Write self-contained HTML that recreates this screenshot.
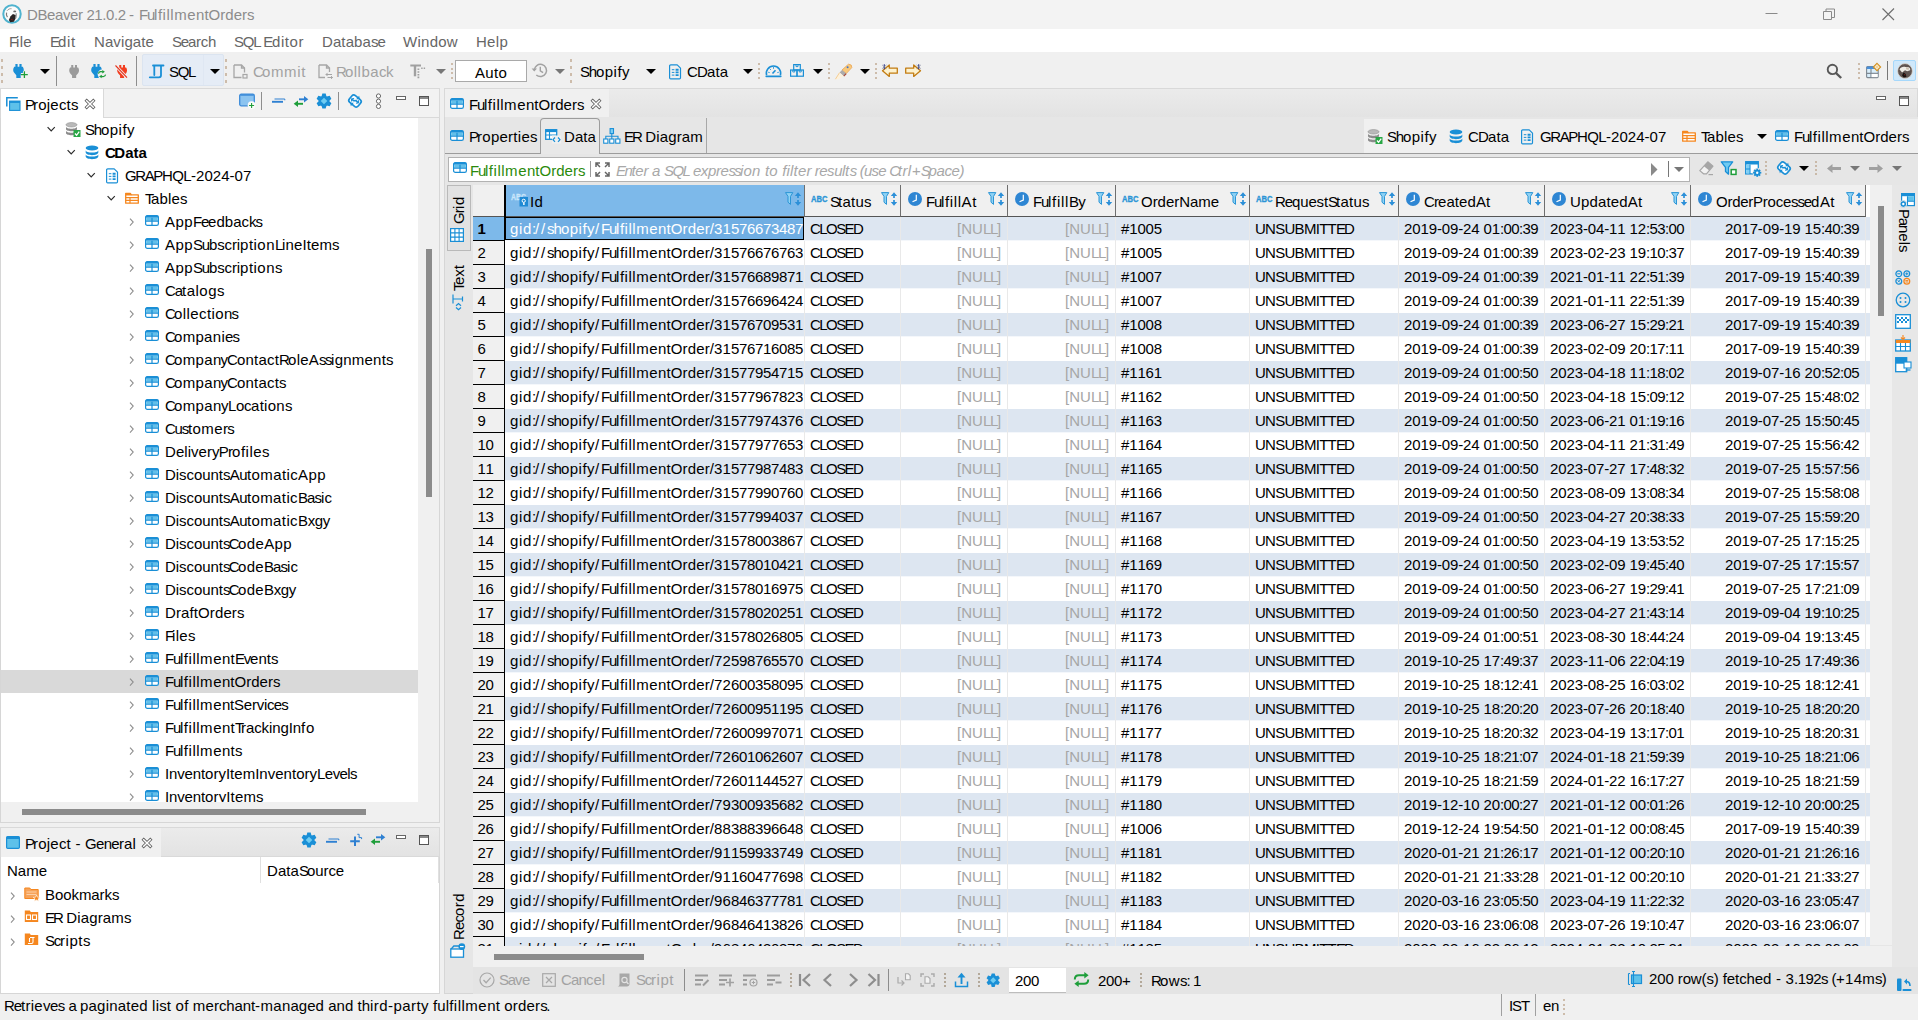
<!DOCTYPE html>
<html><head><meta charset="utf-8"><title>DBeaver 21.0.2 - FulfillmentOrders</title>
<style>
*{box-sizing:border-box;margin:0;padding:0}
html,body{width:1918px;height:1020px;overflow:hidden;background:#f0f0f0;font-family:"Liberation Sans", sans-serif;font-size:15px;color:#000}
.abs,.abs>*{position:absolute}
.t{position:absolute;white-space:pre;line-height:20px;height:20px;font-kerning:none;font-variant-ligatures:none}
.i{position:absolute;display:block;overflow:visible}
#title{left:0;top:0;width:1918px;height:29px;background:#f3f3f3}
#menu{left:0;top:29px;width:1918px;height:23px;background:#fff}
#tb{left:0;top:52px;width:1918px;height:36px;background:#f0f0f0}
.hd{position:absolute;width:2px;background:repeating-linear-gradient(#cdbcab 0 3px,transparent 3px 7px)}
.hd.s{background:repeating-linear-gradient(#cdbcab 0 2px,transparent 2px 4.67px)}
.vs{position:absolute;width:1px;background:#8e8e8e}
.dd{position:absolute;margin-left:1px;width:0;height:0;border-left:5px solid transparent;border-right:5px solid transparent;border-top:5px solid #000}
.dd.g{border-top-color:#777}
.gr{color:#a2a2a2}
.tabbar{position:absolute;background:#f2f2f2;border:1px solid #d9d9d9}
.tab{position:absolute;background:#fff}
#tree{left:1px;top:118px;width:417px;height:684px;background:#fff;overflow:hidden}
.tr{position:absolute;left:0;width:417px;height:23px}
.tr.sel{background:#d9d9d9}
#grid{left:473px;top:185px;width:1397px;height:761px;background:#fff;overflow:hidden}
.row{position:absolute;left:32px;width:1365px;height:24px}
.row.o{background:linear-gradient(#dde6f1 0 23px,#f4f7fb 23px 24px)}
.c{position:absolute;top:0;height:24px;border-right:1px solid #e9e9e9;overflow:hidden}
.nul{color:#a6a6a6}
.rn{position:absolute;left:0;width:31px;height:24px;background:#f0f0f0;border-bottom:1px solid #000}
.hc{position:absolute;top:0;height:32px;background:#f0f0f0;border-right:1px solid #6e6e6e;border-bottom:1px solid #555}
</style></head><body>

<div id="title" class="abs">
<svg class="i" style="left:2px;top:4px" width="20" height="20" viewBox="0 0 22 22"><circle cx="11" cy="11" r="9.6" fill="#fbfbfb" stroke="#4fb3cf" stroke-width="2.2"/><path d="M5.500 7.500c1.500-2 3.500-2.500 5-2.300" stroke="#8f8f8f" stroke-width="1" fill="none"/><path d="M5 9.500c-.5 2 .3 4 1 5" stroke="#7a7a7a" stroke-width="1.300" fill="none"/><ellipse cx="14" cy="8.200" rx="1.600" ry="1" fill="#6a6a6a"/><path d="M9.500 13.500l2.500-2.500l3.500 1.500l-.5 3.500l-2 3.500l-4 .5l-1.500-2.500z" fill="#2a2424"/><path d="M15 10l1.500 .5l-.5 5l-1.500 1z" fill="#9a9a9a"/><path d="M10 17l1.800 .3" stroke="#8a1c1c" stroke-width="1"/></svg>
<span class="t " style="left:27px;top:5px;color:#8c8c8c"><span style="letter-spacing:-0.39px">DBeaver 21.0</span><span style="letter-spacing:-0.56px">.2 </span><span style="letter-spacing:0.42px">- </span><span style="letter-spacing:-1.25px">Fu</span><span style="letter-spacing:0.52px">lfillme</span><span style="letter-spacing:0.02px">ntOrder</span><span style="letter-spacing:-1.50px">s</span></span>
<svg class="i" style="left:1765px;top:8px" width="14" height="14" viewBox="0 0 14 14"><path d="M0.5 5.5h12" stroke="#8a8a8a" fill="none"/></svg>
<svg class="i" style="left:1823px;top:8px" width="14" height="14" viewBox="0 0 14 14"><path d="M0.5 3.5h8v8h-8z M3 3.5v-2.5h8.5v8.5h-3" stroke="#8a8a8a" fill="none"/></svg>
<svg class="i" style="left:1882px;top:8px" width="14" height="14" viewBox="0 0 14 14"><path d="M.5 .5l11.500 11.500M12 .5l-11.500 11.500" stroke="#6e6e6e" fill="none" stroke-width="1.100"/></svg>
</div>
<div id="menu" class="abs">
<span class="t " style="left:9px;top:3px;color:#666"><span style="letter-spacing:-2.16px">F</span><span style="letter-spacing:0.33px">ile</span></span>
<span class="t " style="left:50px;top:3px;color:#666"><span style="letter-spacing:-2.01px">E</span><span style="letter-spacing:0.72px">dit</span></span>
<span class="t " style="left:94px;top:3px;color:#666"><span style="letter-spacing:0.10px">Navigate</span></span>
<span class="t " style="left:172px;top:3px;color:#666"><span style="letter-spacing:-1.17px">Se</span><span style="letter-spacing:-0.30px">arch</span></span>
<span class="t " style="left:234px;top:3px;color:#666"><span style="letter-spacing:-1.24px">SQL E</span><span style="letter-spacing:0.56px">ditor</span></span>
<span class="t " style="left:322px;top:3px;color:#666"><span style="letter-spacing:0.10px">Databa</span><span style="letter-spacing:-0.92px">se</span></span>
<span class="t " style="left:403px;top:3px;color:#666"><span style="letter-spacing:0.27px">Window</span></span>
<span class="t " style="left:476px;top:3px;color:#666"><span style="letter-spacing:0.29px">Help</span></span>
</div>
<div id="tb" class="abs">
<div class="hd" style="left:1px;top:7px;height:24px"></div>
<svg class="i" style="left:13px;top:12px" width="17" height="16" viewBox="0 0 17 16"><rect x="2.400" y="0" width="2.200" height="3.500" fill="#1a8fd6"/><rect x="6.400" y="0" width="2.200" height="3.500" fill="#1a8fd6"/><path d="M1.200 2.800h8.600c1.200 1.800 1.400 4 .2 5.800l-2.300 2.600v2.800h-4.400v-2.800l-2.300-2.600c-1.200-1.800-1-4 .2-5.800z" fill="#1a8fd6"/><path d="M11.400 7v7M7.900 10.500h7" stroke="#f0f0f0" stroke-width="2.800"/><path d="M11.400 7.200v6.800M8 10.600h6.800" stroke="#1e9e3a" stroke-width="1.300"/></svg>
<div class="dd" style="left:39px;top:17px"></div>
<div class="vs" style="left:56px;top:4px;height:30px"></div>
<svg class="i" style="left:69px;top:13px" width="11" height="14" viewBox="0 0 11 14"><g transform="scale(.93)"><rect x="2.400" y="0" width="2.200" height="3.500" fill="#9b9b9b"/><rect x="6.400" y="0" width="2.200" height="3.500" fill="#9b9b9b"/><path d="M1.200 2.800h8.600c1.200 1.800 1.400 4 .2 5.800l-2.300 2.600v2.800h-4.400v-2.800l-2.300-2.600c-1.200-1.800-1-4 .2-5.800z" fill="#9b9b9b"/></g></svg>
<svg class="i" style="left:91px;top:12px" width="17" height="16" viewBox="0 0 17 16"><rect x="2.400" y="0" width="2.200" height="3.500" fill="#1a8fd6"/><rect x="6.400" y="0" width="2.200" height="3.500" fill="#1a8fd6"/><path d="M1.200 2.800h8.600c1.200 1.800 1.400 4 .2 5.800l-2.300 2.600v2.800h-4.400v-2.800l-2.300-2.600c-1.200-1.800-1-4 .2-5.800z" fill="#1a8fd6"/><circle cx="11" cy="10" r="4.400" fill="#f0f0f0"/><path d="M7.400 9.600c.6-2 3.200-2.600 4.800-1.500M14.600 10.600c-.6 2-3.200 2.600-4.800 1.500" stroke="#1e9e3a" stroke-width="1.200" fill="none"/><path d="M11.300 6l2.600 1.800l-2.600 1.700zM10.700 14.200l-2.600-1.800l2.600-1.700z" fill="#1e9e3a"/></svg>
<svg class="i" style="left:115px;top:12px" width="14" height="16" viewBox="0 0 14 16"><g transform="translate(2,1) scale(.93)"><rect x="2.400" y="0" width="2.200" height="3.500" fill="#f23d1f"/><rect x="6.400" y="0" width="2.200" height="3.500" fill="#f23d1f"/><path d="M1.200 2.800h8.600c1.200 1.800 1.400 4 .2 5.800l-2.300 2.600v2.800h-4.400v-2.800l-2.300-2.600c-1.200-1.800-1-4 .2-5.800z" fill="#f23d1f"/></g><path d="M.8 1.800l11 11.700" stroke="#f0f0f0" stroke-width="2.800"/><path d="M.5 1.500l11.500 12.200" stroke="#e6311a" stroke-width="1.100"/></svg>
<div class="vs" style="left:136px;top:4px;height:30px"></div>
<div style="left:142px;top:2px;width:82px;height:32px;background:#e5ecf6;border:1px solid #dbe4f0;border-radius:2px"></div>
<div style="left:203px;top:3px;width:1px;height:30px;background:#dfe7f3"></div>
<svg class="i" style="left:149px;top:12px" width="16" height="15" viewBox="0 0 16 15"><path d="M4 1.500h10.500M5.300 1.500v9.500M12 1.500v9.800c0 1.400-.7 2-2 2h-9.200" stroke="#1a8fd6" stroke-width="1.800" fill="none" stroke-linecap="round"/></svg>
<span class="t " style="left:169px;top:10px;"><span style="letter-spacing:-1.34px">SQL</span></span>
<div class="dd" style="left:209px;top:17px"></div>
<div class="hd" style="left:225px;top:7px;height:24px"></div>
<svg class="i" style="left:233px;top:12px" width="15" height="15" viewBox="0 0 15 15"><path d="M1 1h7.5l3 3v4.5M1 1v12.5h7.5" stroke="#a6a6a6" stroke-width="1.3" fill="none"/><path d="M8.5 1v3h3" stroke="#a6a6a6" stroke-width="1.3" fill="none"/><rect x="10" y="10.5" width="4" height="3.5" stroke="#a6a6a6" fill="none" stroke-width="1.2"/></svg>
<span class="t gr" style="left:253px;top:10px;"><span style="letter-spacing:-1.83px">C</span><span style="letter-spacing:0.63px">ommit</span></span>
<svg class="i" style="left:318px;top:12px" width="15" height="15" viewBox="0 0 15 15"><path d="M1 1h7.5l3 3v4M1 1v12.5h6" stroke="#a6a6a6" stroke-width="1.3" fill="none"/><path d="M8.5 1v3h3" stroke="#a6a6a6" stroke-width="1.3" fill="none"/><path d="M8 10.5h6M8 10.5l1.6-1.6M8 10.5l1.6 1.6M14.5 13.5h-5M14.5 13.5l-1.4-1.4M14.5 13.5l-1.4 1.4" stroke="#a6a6a6" stroke-width="1" fill="none"/></svg>
<span class="t gr" style="left:336px;top:10px;"><span style="letter-spacing:-1.83px">R</span><span style="letter-spacing:0.46px">ollba</span><span style="letter-spacing:-0.50px">ck</span></span>
<svg class="i" style="left:410px;top:12px" width="16" height="15" viewBox="0 0 16 15"><path d="M.3 1.500h10.700" stroke="#a0a0a0" stroke-width="2"/><path d="M5 1.500v10.800" stroke="#a0a0a0" stroke-width="2.400"/><path d="M11.200 4.200h4.300" stroke="#a0a0a0" stroke-width="1.600" stroke-dasharray="1.400 1.100" fill="none"/><path d="M8.400 4.500v9.800" stroke="#a0a0a0" stroke-width="1.800" stroke-dasharray="1.600 1.100" fill="none"/></svg>
<div class="dd g" style="left:435px;top:17px"></div>
<div class="hd s" style="left:451px;top:11px;height:16px"></div>
<div style="left:455px;top:8px;width:72px;height:22px;background:#fff;border:1px solid #a9a9a9"></div>
<span class="t " style="left:475px;top:11px;"><span style="letter-spacing:0.29px">Auto</span></span>
<svg class="i" style="left:531px;top:11px" width="17" height="15" viewBox="0 0 17 15"><path d="M3.300 7.300a6.100 6.100 0 1 1 2 4.700" stroke="#a2a2a2" stroke-width="1.500" fill="none"/><path d="M.6 5.600l2.700 3l2.700-3z" fill="#a2a2a2"/><path d="M9.300 3.800v4l2.800 1.900" stroke="#a2a2a2" stroke-width="1.400" fill="none"/></svg>
<div class="dd g" style="left:554px;top:17px"></div>
<div class="hd" style="left:570px;top:7px;height:24px"></div>
<span class="t " style="left:580px;top:10px;"><span style="letter-spacing:-1.17px">Sh</span><span style="letter-spacing:0.46px">opify</span></span>
<div class="dd" style="left:645px;top:17px"></div>
<svg class="i" style="left:669px;top:12px" width="13" height="16" viewBox="0 0 13 16"><path d="M1.700 .8h6.500l3.300 3.300v9.600c0 .7-.4 1.100-1.100 1.100h-8.700c-.7 0-1.100-.4-1.100-1.100v-11.800c0-.7.4-1.100 1.100-1.100z" fill="none" stroke="#1a8fd6" stroke-width="1.200" stroke-linejoin="round"/><path d="M2.800 5.700h2.600M2.800 8.400h2.600M2.800 11.100h2.600" stroke="#1a8fd6" stroke-width="1"/><path d="M6.600 5.700h3M6.600 8.400h3M6.600 11.100h3" stroke="#1a8fd6" stroke-width="1.900"/></svg>
<span class="t " style="left:687px;top:10px;"><span style="letter-spacing:-0.83px">CD</span><span style="letter-spacing:0.05px">ata</span></span>
<div class="dd" style="left:742px;top:17px"></div>
<div class="hd s" style="left:758px;top:11px;height:16px"></div>
<svg class="i" style="left:765px;top:12px" width="17" height="14" viewBox="0 0 17 14"><path d="M1.600 11.300a7.200 7.200 0 1 1 13.800 0" fill="none" stroke="#1a8fd6" stroke-width="1.500"/><path d="M1.300 12.300h14.400" stroke="#1a8fd6" stroke-width="1.800" stroke-linecap="round"/><path d="M7.500 9.500l3-3.200" stroke="#1a8fd6" stroke-width="1.600"/><path d="M3.300 8.300l1.300.3M4.800 4.800l1 1M8.500 3.200v1.500M13.700 8.300l-1.300.3" stroke="#1a8fd6" stroke-width="1"/></svg>
<svg class="i" style="left:790px;top:12px" width="14" height="13" viewBox="0 0 14 13"><rect x="3.700" y=".6" width="6.600" height="5.400" fill="none" stroke="#1a8fd6" stroke-width="1.200"/><rect x=".6" y="6" width="6.400" height="6.200" fill="none" stroke="#1a8fd6" stroke-width="1.200"/><rect x="7" y="6" width="6.400" height="6.200" fill="none" stroke="#1a8fd6" stroke-width="1.200"/><path d="M6 .6v2h2v-2M2.800 6v2h2v-2M9.200 6v2h2v-2" fill="none" stroke="#1a8fd6" stroke-width=".9"/></svg>
<div class="dd" style="left:812px;top:17px"></div>
<div class="hd s" style="left:828px;top:11px;height:16px"></div>
<svg class="i" style="left:835px;top:11px" width="18" height="17" viewBox="0 0 18 17"><path d="M13.500 1.200l2.700 .8l.6 2.600l-5.600 6l-4.200-3.600z" fill="#f9c97c" stroke="#e9a24e" stroke-width=".8"/><path d="M7 7l4.200 3.600l-2.400 2.600l-4.200-3.600z" fill="#acabab"/><path d="M8.800 13.200l2.400-2.600" stroke="#a94a3c" stroke-width="1.200"/><path d="M4.600 9.600l4.200 3.600l-5.800 3.300l-2.600-.3z" fill="#fdf1dc"/><path d="M4.600 9.600l-4.200 6.600" stroke="#f5c98b" stroke-width=".9"/><circle cx="12.600" cy="4.200" r="1" fill="#3f74c9"/></svg>
<div class="dd" style="left:859px;top:17px"></div>
<div class="hd s" style="left:875px;top:11px;height:16px"></div>
<svg class="i" style="left:881px;top:10px" width="18" height="16" viewBox="0 0 18 16"><path d="M8.300 3v3.200h8v5h-8v3.200l-6.800-5.700z" fill="#fdf2cf" stroke="#c27c12" stroke-width="1.300" stroke-linejoin="round"/><path d="M3.300 2.300v5" stroke="#2d3a8c" stroke-width="1.100"/><path d="M1.200 3l4.200 3.600M5.400 3l-4.200 3.600" stroke="#7a7f9a" stroke-width=".7"/></svg>
<svg class="i" style="left:904px;top:10px" width="18" height="16" viewBox="0 0 18 16"><path d="M9.700 3v3.200h-8v5h8v3.200l6.800-5.700z" fill="#fdf2cf" stroke="#c27c12" stroke-width="1.300" stroke-linejoin="round"/><path d="M14.700 2.300v5" stroke="#2d3a8c" stroke-width="1.100"/><path d="M12.600 3l4.200 3.600M16.800 3l-4.200 3.600" stroke="#7a7f9a" stroke-width=".7"/></svg>
<svg class="i" style="left:1826px;top:11px" width="17" height="17" viewBox="0 0 17 17"><circle cx="6.400" cy="6.400" r="4.700" fill="none" stroke="#585858" stroke-width="1.900"/><path d="M9.800 9.800l5.400 5.200" stroke="#585858" stroke-width="2.300"/></svg>
<div class="hd s" style="left:1858px;top:11px;height:16px"></div>
<svg class="i" style="left:1866px;top:11px" width="17" height="16" viewBox="0 0 17 16"><rect x=".6" y="3.600" width="11.600" height="11" rx="1" fill="#d9eefb" stroke="#7d8791" stroke-width="1.100"/><path d="M.6 4.600c0-.6.4-1 1-1h9.600c.6 0 1 .4 1 1v1.400h-11.600z" fill="#4a90d9"/><path d="M5 6v8.600M.6 10.400h11.600" stroke="#7d8791" stroke-width="1.100"/><rect x="5.600" y="10.900" width="6" height="3.200" fill="#fff"/><path d="M11 .4l3.600 3.600l-3.600 3.600l-3.600-3.600z" fill="#fffdf5" stroke="#d18e1c" stroke-width="1.100"/><path d="M11 2.200v3.600M9.200 4h3.600" stroke="#f3c77a" stroke-width="1"/></svg>
<div class="vs" style="left:1887px;top:9px;height:19px;background:#777"></div>
<div style="left:1893px;top:8px;width:23px;height:21px;background:#cfe8fb;border:1px solid #a6d8fb;border-radius:2px"></div>
<svg class="i" style="left:1897px;top:11px" width="16" height="16" viewBox="0 0 22 22"><circle cx="11" cy="11" r="10.2" fill="#5f5451" stroke="#e8e2d8" stroke-width="1"/><path d="M3.500 9c1-3 5-4.500 8-3.500l4.500 .5c2 1 2.500 2.500 2 4l-4 1.500l-3-1.500l-4 3z" fill="#efece6"/><path d="M12.500 6l4 1l-.5 2.500l-3.500-1z" fill="#cdbfae"/><path d="M9 13l3 2l1 4l-4 1l-2-3z" fill="#17100e"/><path d="M10 16l1.500 .5" stroke="#b5322a" stroke-width="1"/></svg>
</div>
<div class="abs">
<div class="tabbar" style="left:0;top:88px;width:440px;height:30px"></div>
<div class="tab" style="left:1px;top:89px;width:103px;height:29px;border-right:1px solid #d9d9d9"></div>
<svg class="i" style="left:6px;top:97px" width="15" height="14" viewBox="0 0 15 14"><path d="M.8 9.500v-8.700h11" fill="none" stroke="#1a8fd6" stroke-width="1.500"/><rect x="3.600" y="4.100" width="10.400" height="9.300" fill="#5ec1ea" stroke="#1a8fd6" stroke-width="1.100"/><rect x="3.600" y="4.100" width="10.400" height="1.800" fill="#1a8fd6"/></svg>
<span class="t " style="left:25px;top:95px;"><span style="letter-spacing:-2.01px">P</span><span style="letter-spacing:0.22px">roject</span><span style="letter-spacing:-1.50px">s</span></span>
<svg class="i" style="left:85px;top:99px" width="10" height="10" viewBox="0 0 10 10"><path d="M1.700 1.700l6.600 6.600M8.300 1.700l-6.600 6.600" stroke="#5e5e5e" stroke-width="3.100" stroke-linecap="square"/><path d="M1.700 1.700l6.600 6.600M8.300 1.700l-6.600 6.600" stroke="#fff" stroke-width="1.500" stroke-linecap="square"/></svg>
<svg class="i" style="left:239px;top:93px" width="18" height="16" viewBox="0 0 18 16"><rect x=".7" y="1.2" width="14.6" height="11.6" rx="1.5" fill="#8cc4f0" stroke="#3d8bd9" stroke-width="1.3"/><path d="M1.2 2h13.600" stroke="#3d8bd9" stroke-width="1.5"/><circle cx="12.6" cy="12.200" r="3.900" fill="#fafafa"/><path d="M12.600 10v5M10.100 12.500h5" stroke="#1e9e3a" stroke-width="1.100"/></svg>
<div class="vs" style="left:261px;top:92px;height:18px"></div>
<svg class="i" style="left:272px;top:98px" width="14" height="6" viewBox="0 0 14 6"><path d="M2.5 1h10.300v1.300" fill="none" stroke="#2e80d2" stroke-width="1"/><path d="M0 3.800h11" stroke="#2e80d2" stroke-width="1.900"/></svg>
<svg class="i" style="left:293px;top:95px" width="16" height="13" viewBox="0 0 16 13"><path d="M6 4.300h6.500" stroke="#2e80d2" stroke-width="1.900"/><path d="M11 1l4.300 3.300l-4.300 3.300z" fill="#2e80d2"/><path d="M3.500 8.800h6.500" stroke="#1e9e3a" stroke-width="1.900"/><path d="M5 5.500l-4.300 3.300l4.300 3.300z" fill="#1e9e3a"/></svg>
<svg class="i" style="left:316px;top:93px" width="16" height="16" viewBox="0 0 16 16"><path d="M5.600 3.200l.700-2.700h3.400l.700 2.700z" fill="#1a8fd6" transform="rotate(0 8 8)"/><path d="M5.600 3.200l.700-2.700h3.400l.700 2.700z" fill="#1a8fd6" transform="rotate(60 8 8)"/><path d="M5.600 3.200l.700-2.700h3.400l.700 2.700z" fill="#1a8fd6" transform="rotate(120 8 8)"/><path d="M5.600 3.200l.700-2.700h3.400l.700 2.700z" fill="#1a8fd6" transform="rotate(180 8 8)"/><path d="M5.600 3.200l.700-2.700h3.400l.700 2.700z" fill="#1a8fd6" transform="rotate(240 8 8)"/><path d="M5.600 3.200l.700-2.700h3.400l.700 2.700z" fill="#1a8fd6" transform="rotate(300 8 8)"/><circle cx="8" cy="8" r="5.500" fill="#1a8fd6"/><path d="M8 4.700l3.300 3.300l-3.300 3.300l-3.300-3.300z" fill="#6fcdf3"/></svg>
<div class="vs" style="left:338px;top:92px;height:18px"></div>
<svg class="i" style="left:347px;top:93px" width="16" height="16" viewBox="0 0 16 16"><g transform="rotate(40 8 8)"><rect x="2.300" y="3.600" width="11.400" height="8.800" rx="2.600" fill="#f7fbfe" stroke="#1a8fd6" stroke-width="1.700"/><path d="M7.800 1.300l2.800 2.300l-2.800 2.300z" fill="#1a8fd6"/><path d="M8.200 10.100l-2.800 2.300l2.800 2.300z" fill="#1a8fd6"/><path d="M4.300 8.700h2.600l1.600-1.600h3" fill="none" stroke="#1a8fd6" stroke-width="1.500"/><path d="M5.800 6.800l-1.800 1.900l1.800 1.900M10.200 5.200l1.800 1.900l-1.800 1.900" fill="none" stroke="#1a8fd6" stroke-width="1.100"/></g></svg>
<svg class="i" style="left:374px;top:93px" width="8" height="16" viewBox="0 0 8 16"><circle cx="4.500" cy="3" r="2.100" fill="#fff" stroke="#5a5a5a" stroke-width=".9"/><circle cx="4.500" cy="8.200" r="2.100" fill="#fff" stroke="#5a5a5a" stroke-width=".9"/><circle cx="4.500" cy="13.400" r="2.100" fill="#fff" stroke="#5a5a5a" stroke-width=".9"/></svg>
<svg class="i" style="left:396px;top:96px" width="11" height="5" viewBox="0 0 11 5"><rect x=".5" y=".5" width="9" height="3" fill="#fff" stroke="#666" stroke-width="1"/></svg>
<svg class="i" style="left:419px;top:96px" width="11" height="11" viewBox="0 0 11 11"><rect x=".5" y=".5" width="9" height="9" fill="#fff" stroke="#555" stroke-width="1"/><path d="M.5 2h9" stroke="#555" stroke-width="1.4"/></svg>
<div style="left:0;top:118px;width:440px;height:705px;border:1px solid #d6d6d6;border-top:none;background:#f0f0f0"></div>
<div id="tree">
<div class="tr" style="top:0px">
<svg class="i" style="left:45px;top:6px" width="10" height="10" viewBox="0 0 10 10"><path d="M1.600 3.200l3.600 3.600l3.600-3.600" fill="none" stroke="#2b2b2b" stroke-width="1.200"/></svg>
<svg class="i" style="left:64px;top:4px" width="17" height="16" viewBox="0 0 17 16"><ellipse cx="6.5" cy="2.8" rx="5.5" ry="2.2" fill="#b9b9b9" stroke="#8e8e8e" stroke-width=".6"/><path d="M1 4.5c0 3 11 3 11 0v2.5c0 3-11 3-11 0z" fill="#8b8b8b"/><path d="M1 8.5c0 3 11 3 11 0v2.5c0 3-11 3-11 0z" fill="#8b8b8b"/><rect x="8.5" y="8" width="7" height="7" fill="#28a745"/><path d="M10 11.5l1.6 1.8l2.6-3.6" stroke="#fff" stroke-width="1.3" fill="none"/></svg>
<span class="t " style="left:84px;top:2px;"><span style="letter-spacing:-1.17px">Sh</span><span style="letter-spacing:0.46px">opify</span></span>
</div>
<div class="tr" style="top:23px">
<svg class="i" style="left:65px;top:6px" width="10" height="10" viewBox="0 0 10 10"><path d="M1.600 3.200l3.600 3.600l3.600-3.600" fill="none" stroke="#2b2b2b" stroke-width="1.200"/></svg>
<svg class="i" style="left:84px;top:4px" width="14" height="15" viewBox="0 0 14 15"><ellipse cx="7" cy="3" rx="6.3" ry="2.6" fill="#1a8fd6"/><path d="M.7 5.2c0 3.2 12.6 3.2 12.6 0v2.4c0 3.4-12.6 3.4-12.6 0z" fill="#1a8fd6"/><path d="M.7 9.2c0 3.2 12.6 3.2 12.6 0v2.4c0 3.4-12.6 3.4-12.6 0z" fill="#1a8fd6"/></svg>
<span class="t " style="left:104px;top:2px;font-weight:bold;"><span style="letter-spacing:-1.61px">C</span><span style="letter-spacing:0.07px">Data</span></span>
</div>
<div class="tr" style="top:46px">
<svg class="i" style="left:85px;top:6px" width="10" height="10" viewBox="0 0 10 10"><path d="M1.600 3.200l3.600 3.600l3.600-3.600" fill="none" stroke="#2b2b2b" stroke-width="1.200"/></svg>
<svg class="i" style="left:105px;top:4px" width="13" height="16" viewBox="0 0 13 16"><path d="M1.700 .8h6.500l3.300 3.300v9.600c0 .7-.4 1.100-1.100 1.100h-8.700c-.7 0-1.100-.4-1.100-1.100v-11.800c0-.7.4-1.100 1.100-1.100z" fill="none" stroke="#1a8fd6" stroke-width="1.200" stroke-linejoin="round"/><path d="M2.800 5.700h2.600M2.800 8.400h2.600M2.800 11.100h2.600" stroke="#1a8fd6" stroke-width="1"/><path d="M6.600 5.700h3M6.600 8.400h3M6.600 11.100h3" stroke="#1a8fd6" stroke-width="1.900"/></svg>
<span class="t " style="left:124px;top:2px;"><span style="letter-spacing:-1.38px">GRAP</span><span style="letter-spacing:-0.61px">HQL</span><span style="letter-spacing:0.04px">-2024-0</span><span style="letter-spacing:-0.34px">7</span></span>
</div>
<div class="tr" style="top:69px">
<svg class="i" style="left:105px;top:6px" width="10" height="10" viewBox="0 0 10 10"><path d="M1.600 3.200l3.600 3.600l3.600-3.600" fill="none" stroke="#2b2b2b" stroke-width="1.200"/></svg>
<svg class="i" style="left:124px;top:5px" width="14" height="12" viewBox="0 0 14 12"><path d="M.7 1.300h4.600l1 1.500h7v8.400h-12.600z" fill="#fff" stroke="#f5871f" stroke-width="1.300" stroke-linejoin="round"/><path d="M.7 5.600h12.600M.7 8.400h12.600M5 5.600v5.600" stroke="#f5871f" stroke-width="1.200"/><path d="M.7 1.300h4.600l1 1.500v.6h-5.600z" fill="#f5871f"/></svg>
<span class="t " style="left:144px;top:2px;"><span style="letter-spacing:-3.16px">T</span><span style="letter-spacing:0.16px">able</span><span style="letter-spacing:-1.50px">s</span></span>
</div>
<div class="tr" style="top:92px">
<svg class="i" style="left:127px;top:6px" width="8" height="12" viewBox="0 0 8 12"><path d="M2 2.600l3.200 3.500l-3.200 3.500" fill="none" stroke="#8e8e8e" stroke-width="1.100"/></svg>
<svg class="i" style="left:144px;top:5px" width="14" height="11" viewBox="0 0 14 11"><rect x=".6" y=".6" width="12.800" height="9.800" rx="1.700" fill="#fff" stroke="#1a8fd6" stroke-width="1.200"/><path d="M.6 2.800v-.7c0-1 .5-1.500 1.500-1.500h9.800c1 0 1.500.5 1.500 1.500v.7z" fill="#1a8fd6"/><rect x="1.200" y="2.700" width="11.600" height="3" fill="#62c0ea"/><path d="M.6 6.200h12.800M7 2.700v7.700" stroke="#1a8fd6" stroke-width="1.200"/></svg>
<span class="t " style="left:164px;top:2px;"><span style="letter-spacing:0.44px">App</span><span style="letter-spacing:-1.25px">Fe</span><span style="letter-spacing:0.03px">edbac</span><span style="letter-spacing:-1.00px">ks</span></span>
</div>
<div class="tr" style="top:115px">
<svg class="i" style="left:127px;top:6px" width="8" height="12" viewBox="0 0 8 12"><path d="M2 2.600l3.200 3.500l-3.200 3.500" fill="none" stroke="#8e8e8e" stroke-width="1.100"/></svg>
<svg class="i" style="left:144px;top:5px" width="14" height="11" viewBox="0 0 14 11"><rect x=".6" y=".6" width="12.800" height="9.800" rx="1.700" fill="#fff" stroke="#1a8fd6" stroke-width="1.200"/><path d="M.6 2.800v-.7c0-1 .5-1.500 1.500-1.500h9.800c1 0 1.500.5 1.500 1.500v.7z" fill="#1a8fd6"/><rect x="1.200" y="2.700" width="11.600" height="3" fill="#62c0ea"/><path d="M.6 6.200h12.800M7 2.700v7.700" stroke="#1a8fd6" stroke-width="1.200"/></svg>
<span class="t " style="left:164px;top:2px;"><span style="letter-spacing:0.44px">App</span><span style="letter-spacing:-1.17px">Su</span><span style="letter-spacing:-0.13px">bscri</span><span style="letter-spacing:0.49px">ption</span><span style="letter-spacing:-1.34px">L</span><span style="letter-spacing:0.12px">ineItem</span><span style="letter-spacing:-1.50px">s</span></span>
</div>
<div class="tr" style="top:138px">
<svg class="i" style="left:127px;top:6px" width="8" height="12" viewBox="0 0 8 12"><path d="M2 2.600l3.200 3.500l-3.200 3.500" fill="none" stroke="#8e8e8e" stroke-width="1.100"/></svg>
<svg class="i" style="left:144px;top:5px" width="14" height="11" viewBox="0 0 14 11"><rect x=".6" y=".6" width="12.800" height="9.800" rx="1.700" fill="#fff" stroke="#1a8fd6" stroke-width="1.200"/><path d="M.6 2.800v-.7c0-1 .5-1.500 1.500-1.500h9.800c1 0 1.500.5 1.500 1.500v.7z" fill="#1a8fd6"/><rect x="1.200" y="2.700" width="11.600" height="3" fill="#62c0ea"/><path d="M.6 6.200h12.800M7 2.700v7.700" stroke="#1a8fd6" stroke-width="1.200"/></svg>
<span class="t " style="left:164px;top:2px;"><span style="letter-spacing:0.44px">App</span><span style="letter-spacing:-1.17px">Su</span><span style="letter-spacing:-0.13px">bscri</span><span style="letter-spacing:0.49px">ption</span><span style="letter-spacing:-1.50px">s</span></span>
</div>
<div class="tr" style="top:161px">
<svg class="i" style="left:127px;top:6px" width="8" height="12" viewBox="0 0 8 12"><path d="M2 2.600l3.200 3.500l-3.200 3.500" fill="none" stroke="#8e8e8e" stroke-width="1.100"/></svg>
<svg class="i" style="left:144px;top:5px" width="14" height="11" viewBox="0 0 14 11"><rect x=".6" y=".6" width="12.800" height="9.800" rx="1.700" fill="#fff" stroke="#1a8fd6" stroke-width="1.200"/><path d="M.6 2.800v-.7c0-1 .5-1.500 1.500-1.500h9.800c1 0 1.500.5 1.500 1.500v.7z" fill="#1a8fd6"/><rect x="1.200" y="2.700" width="11.600" height="3" fill="#62c0ea"/><path d="M.6 6.200h12.800M7 2.700v7.700" stroke="#1a8fd6" stroke-width="1.200"/></svg>
<span class="t " style="left:164px;top:2px;"><span style="letter-spacing:-1.09px">Ca</span><span style="letter-spacing:0.49px">talog</span><span style="letter-spacing:-1.50px">s</span></span>
</div>
<div class="tr" style="top:184px">
<svg class="i" style="left:127px;top:6px" width="8" height="12" viewBox="0 0 8 12"><path d="M2 2.600l3.200 3.500l-3.200 3.500" fill="none" stroke="#8e8e8e" stroke-width="1.100"/></svg>
<svg class="i" style="left:144px;top:5px" width="14" height="11" viewBox="0 0 14 11"><rect x=".6" y=".6" width="12.800" height="9.800" rx="1.700" fill="#fff" stroke="#1a8fd6" stroke-width="1.200"/><path d="M.6 2.800v-.7c0-1 .5-1.500 1.500-1.500h9.800c1 0 1.500.5 1.500 1.500v.7z" fill="#1a8fd6"/><rect x="1.200" y="2.700" width="11.600" height="3" fill="#62c0ea"/><path d="M.6 6.200h12.800M7 2.700v7.700" stroke="#1a8fd6" stroke-width="1.200"/></svg>
<span class="t " style="left:164px;top:2px;"><span style="letter-spacing:-1.83px">C</span><span style="letter-spacing:0.41px">ollectio</span><span style="letter-spacing:-0.92px">ns</span></span>
</div>
<div class="tr" style="top:207px">
<svg class="i" style="left:127px;top:6px" width="8" height="12" viewBox="0 0 8 12"><path d="M2 2.600l3.200 3.500l-3.200 3.500" fill="none" stroke="#8e8e8e" stroke-width="1.100"/></svg>
<svg class="i" style="left:144px;top:5px" width="14" height="11" viewBox="0 0 14 11"><rect x=".6" y=".6" width="12.800" height="9.800" rx="1.700" fill="#fff" stroke="#1a8fd6" stroke-width="1.200"/><path d="M.6 2.800v-.7c0-1 .5-1.500 1.500-1.500h9.800c1 0 1.500.5 1.500 1.500v.7z" fill="#1a8fd6"/><rect x="1.200" y="2.700" width="11.600" height="3" fill="#62c0ea"/><path d="M.6 6.200h12.800M7 2.700v7.700" stroke="#1a8fd6" stroke-width="1.200"/></svg>
<span class="t " style="left:164px;top:2px;"><span style="letter-spacing:-1.83px">C</span><span style="letter-spacing:0.30px">ompani</span><span style="letter-spacing:-0.92px">es</span></span>
</div>
<div class="tr" style="top:230px">
<svg class="i" style="left:127px;top:6px" width="8" height="12" viewBox="0 0 8 12"><path d="M2 2.600l3.200 3.500l-3.200 3.500" fill="none" stroke="#8e8e8e" stroke-width="1.100"/></svg>
<svg class="i" style="left:144px;top:5px" width="14" height="11" viewBox="0 0 14 11"><rect x=".6" y=".6" width="12.800" height="9.800" rx="1.700" fill="#fff" stroke="#1a8fd6" stroke-width="1.200"/><path d="M.6 2.800v-.7c0-1 .5-1.500 1.500-1.500h9.800c1 0 1.500.5 1.500 1.500v.7z" fill="#1a8fd6"/><rect x="1.200" y="2.700" width="11.600" height="3" fill="#62c0ea"/><path d="M.6 6.200h12.800M7 2.700v7.700" stroke="#1a8fd6" stroke-width="1.200"/></svg>
<span class="t " style="left:164px;top:2px;"><span style="letter-spacing:-1.83px">C</span><span style="letter-spacing:0.37px">ompa</span><span style="letter-spacing:-0.89px">nyC</span><span style="letter-spacing:0.19px">ontact</span><span style="letter-spacing:-1.83px">R</span><span style="letter-spacing:0.24px">oleA</span><span style="letter-spacing:-1.50px">ss</span><span style="letter-spacing:0.23px">ignment</span><span style="letter-spacing:-1.50px">s</span></span>
</div>
<div class="tr" style="top:253px">
<svg class="i" style="left:127px;top:6px" width="8" height="12" viewBox="0 0 8 12"><path d="M2 2.600l3.200 3.500l-3.200 3.500" fill="none" stroke="#8e8e8e" stroke-width="1.100"/></svg>
<svg class="i" style="left:144px;top:5px" width="14" height="11" viewBox="0 0 14 11"><rect x=".6" y=".6" width="12.800" height="9.800" rx="1.700" fill="#fff" stroke="#1a8fd6" stroke-width="1.200"/><path d="M.6 2.800v-.7c0-1 .5-1.500 1.500-1.500h9.800c1 0 1.500.5 1.500 1.500v.7z" fill="#1a8fd6"/><rect x="1.200" y="2.700" width="11.600" height="3" fill="#62c0ea"/><path d="M.6 6.200h12.800M7 2.700v7.700" stroke="#1a8fd6" stroke-width="1.200"/></svg>
<span class="t " style="left:164px;top:2px;"><span style="letter-spacing:-1.83px">C</span><span style="letter-spacing:0.37px">ompa</span><span style="letter-spacing:-0.89px">nyC</span><span style="letter-spacing:0.19px">ontact</span><span style="letter-spacing:-1.50px">s</span></span>
</div>
<div class="tr" style="top:276px">
<svg class="i" style="left:127px;top:6px" width="8" height="12" viewBox="0 0 8 12"><path d="M2 2.600l3.200 3.500l-3.200 3.500" fill="none" stroke="#8e8e8e" stroke-width="1.100"/></svg>
<svg class="i" style="left:144px;top:5px" width="14" height="11" viewBox="0 0 14 11"><rect x=".6" y=".6" width="12.800" height="9.800" rx="1.700" fill="#fff" stroke="#1a8fd6" stroke-width="1.200"/><path d="M.6 2.800v-.7c0-1 .5-1.500 1.500-1.500h9.800c1 0 1.500.5 1.500 1.500v.7z" fill="#1a8fd6"/><rect x="1.200" y="2.700" width="11.600" height="3" fill="#62c0ea"/><path d="M.6 6.200h12.800M7 2.700v7.700" stroke="#1a8fd6" stroke-width="1.200"/></svg>
<span class="t " style="left:164px;top:2px;"><span style="letter-spacing:-1.83px">C</span><span style="letter-spacing:0.37px">ompa</span><span style="letter-spacing:-0.41px">nyLoc</span><span style="letter-spacing:0.29px">ation</span><span style="letter-spacing:-1.50px">s</span></span>
</div>
<div class="tr" style="top:299px">
<svg class="i" style="left:127px;top:6px" width="8" height="12" viewBox="0 0 8 12"><path d="M2 2.600l3.200 3.500l-3.200 3.500" fill="none" stroke="#8e8e8e" stroke-width="1.100"/></svg>
<svg class="i" style="left:144px;top:5px" width="14" height="11" viewBox="0 0 14 11"><rect x=".6" y=".6" width="12.800" height="9.800" rx="1.700" fill="#fff" stroke="#1a8fd6" stroke-width="1.200"/><path d="M.6 2.800v-.7c0-1 .5-1.500 1.500-1.500h9.800c1 0 1.500.5 1.500 1.500v.7z" fill="#1a8fd6"/><rect x="1.200" y="2.700" width="11.600" height="3" fill="#62c0ea"/><path d="M.6 6.200h12.800M7 2.700v7.700" stroke="#1a8fd6" stroke-width="1.200"/></svg>
<span class="t " style="left:164px;top:2px;"><span style="letter-spacing:-1.23px">Cus</span><span style="letter-spacing:0.41px">tome</span><span style="letter-spacing:-0.75px">rs</span></span>
</div>
<div class="tr" style="top:322px">
<svg class="i" style="left:127px;top:6px" width="8" height="12" viewBox="0 0 8 12"><path d="M2 2.600l3.200 3.500l-3.200 3.500" fill="none" stroke="#8e8e8e" stroke-width="1.100"/></svg>
<svg class="i" style="left:144px;top:5px" width="14" height="11" viewBox="0 0 14 11"><rect x=".6" y=".6" width="12.800" height="9.800" rx="1.700" fill="#fff" stroke="#1a8fd6" stroke-width="1.200"/><path d="M.6 2.800v-.7c0-1 .5-1.500 1.500-1.500h9.800c1 0 1.500.5 1.500 1.500v.7z" fill="#1a8fd6"/><rect x="1.200" y="2.700" width="11.600" height="3" fill="#62c0ea"/><path d="M.6 6.200h12.800M7 2.700v7.700" stroke="#1a8fd6" stroke-width="1.200"/></svg>
<span class="t " style="left:164px;top:2px;"><span style="letter-spacing:0.05px">Deliver</span><span style="letter-spacing:-0.83px">yPr</span><span style="letter-spacing:0.50px">ofile</span><span style="letter-spacing:-1.50px">s</span></span>
</div>
<div class="tr" style="top:345px">
<svg class="i" style="left:127px;top:6px" width="8" height="12" viewBox="0 0 8 12"><path d="M2 2.600l3.200 3.500l-3.200 3.500" fill="none" stroke="#8e8e8e" stroke-width="1.100"/></svg>
<svg class="i" style="left:144px;top:5px" width="14" height="11" viewBox="0 0 14 11"><rect x=".6" y=".6" width="12.800" height="9.800" rx="1.700" fill="#fff" stroke="#1a8fd6" stroke-width="1.200"/><path d="M.6 2.800v-.7c0-1 .5-1.500 1.500-1.500h9.800c1 0 1.500.5 1.500 1.500v.7z" fill="#1a8fd6"/><rect x="1.200" y="2.700" width="11.600" height="3" fill="#62c0ea"/><path d="M.6 6.200h12.800M7 2.700v7.700" stroke="#1a8fd6" stroke-width="1.200"/></svg>
<span class="t " style="left:164px;top:2px;"><span style="letter-spacing:-0.05px">Discount</span><span style="letter-spacing:-0.62px">sAu</span><span style="letter-spacing:0.40px">tomaticApp</span></span>
</div>
<div class="tr" style="top:368px">
<svg class="i" style="left:127px;top:6px" width="8" height="12" viewBox="0 0 8 12"><path d="M2 2.600l3.200 3.500l-3.200 3.500" fill="none" stroke="#8e8e8e" stroke-width="1.100"/></svg>
<svg class="i" style="left:144px;top:5px" width="14" height="11" viewBox="0 0 14 11"><rect x=".6" y=".6" width="12.800" height="9.800" rx="1.700" fill="#fff" stroke="#1a8fd6" stroke-width="1.200"/><path d="M.6 2.800v-.7c0-1 .5-1.500 1.500-1.500h9.800c1 0 1.500.5 1.500 1.500v.7z" fill="#1a8fd6"/><rect x="1.200" y="2.700" width="11.600" height="3" fill="#62c0ea"/><path d="M.6 6.200h12.800M7 2.700v7.700" stroke="#1a8fd6" stroke-width="1.200"/></svg>
<span class="t " style="left:164px;top:2px;"><span style="letter-spacing:-0.05px">Discount</span><span style="letter-spacing:-0.62px">sAu</span><span style="letter-spacing:0.38px">tomatic</span><span style="letter-spacing:-0.95px">Bas</span><span style="letter-spacing:0.08px">ic</span></span>
</div>
<div class="tr" style="top:391px">
<svg class="i" style="left:127px;top:6px" width="8" height="12" viewBox="0 0 8 12"><path d="M2 2.600l3.200 3.500l-3.200 3.500" fill="none" stroke="#8e8e8e" stroke-width="1.100"/></svg>
<svg class="i" style="left:144px;top:5px" width="14" height="11" viewBox="0 0 14 11"><rect x=".6" y=".6" width="12.800" height="9.800" rx="1.700" fill="#fff" stroke="#1a8fd6" stroke-width="1.200"/><path d="M.6 2.800v-.7c0-1 .5-1.500 1.500-1.500h9.800c1 0 1.500.5 1.500 1.500v.7z" fill="#1a8fd6"/><rect x="1.200" y="2.700" width="11.600" height="3" fill="#62c0ea"/><path d="M.6 6.200h12.800M7 2.700v7.700" stroke="#1a8fd6" stroke-width="1.200"/></svg>
<span class="t " style="left:164px;top:2px;"><span style="letter-spacing:-0.05px">Discount</span><span style="letter-spacing:-0.62px">sAu</span><span style="letter-spacing:0.38px">tomatic</span><span style="letter-spacing:-0.34px">Bxgy</span></span>
</div>
<div class="tr" style="top:414px">
<svg class="i" style="left:127px;top:6px" width="8" height="12" viewBox="0 0 8 12"><path d="M2 2.600l3.200 3.500l-3.200 3.500" fill="none" stroke="#8e8e8e" stroke-width="1.100"/></svg>
<svg class="i" style="left:144px;top:5px" width="14" height="11" viewBox="0 0 14 11"><rect x=".6" y=".6" width="12.800" height="9.800" rx="1.700" fill="#fff" stroke="#1a8fd6" stroke-width="1.200"/><path d="M.6 2.800v-.7c0-1 .5-1.500 1.500-1.500h9.800c1 0 1.500.5 1.500 1.500v.7z" fill="#1a8fd6"/><rect x="1.200" y="2.700" width="11.600" height="3" fill="#62c0ea"/><path d="M.6 6.200h12.800M7 2.700v7.700" stroke="#1a8fd6" stroke-width="1.200"/></svg>
<span class="t " style="left:164px;top:2px;"><span style="letter-spacing:-0.05px">Discount</span><span style="letter-spacing:-1.67px">sC</span><span style="letter-spacing:0.38px">odeApp</span></span>
</div>
<div class="tr" style="top:437px">
<svg class="i" style="left:127px;top:6px" width="8" height="12" viewBox="0 0 8 12"><path d="M2 2.600l3.200 3.500l-3.200 3.500" fill="none" stroke="#8e8e8e" stroke-width="1.100"/></svg>
<svg class="i" style="left:144px;top:5px" width="14" height="11" viewBox="0 0 14 11"><rect x=".6" y=".6" width="12.800" height="9.800" rx="1.700" fill="#fff" stroke="#1a8fd6" stroke-width="1.200"/><path d="M.6 2.800v-.7c0-1 .5-1.500 1.500-1.500h9.800c1 0 1.500.5 1.500 1.500v.7z" fill="#1a8fd6"/><rect x="1.200" y="2.700" width="11.600" height="3" fill="#62c0ea"/><path d="M.6 6.200h12.800M7 2.700v7.700" stroke="#1a8fd6" stroke-width="1.200"/></svg>
<span class="t " style="left:164px;top:2px;"><span style="letter-spacing:-0.05px">Discount</span><span style="letter-spacing:-1.67px">sC</span><span style="letter-spacing:0.32px">ode</span><span style="letter-spacing:-0.95px">Bas</span><span style="letter-spacing:0.08px">ic</span></span>
</div>
<div class="tr" style="top:460px">
<svg class="i" style="left:127px;top:6px" width="8" height="12" viewBox="0 0 8 12"><path d="M2 2.600l3.200 3.500l-3.200 3.500" fill="none" stroke="#8e8e8e" stroke-width="1.100"/></svg>
<svg class="i" style="left:144px;top:5px" width="14" height="11" viewBox="0 0 14 11"><rect x=".6" y=".6" width="12.800" height="9.800" rx="1.700" fill="#fff" stroke="#1a8fd6" stroke-width="1.200"/><path d="M.6 2.800v-.7c0-1 .5-1.500 1.500-1.500h9.800c1 0 1.500.5 1.500 1.500v.7z" fill="#1a8fd6"/><rect x="1.200" y="2.700" width="11.600" height="3" fill="#62c0ea"/><path d="M.6 6.200h12.800M7 2.700v7.700" stroke="#1a8fd6" stroke-width="1.200"/></svg>
<span class="t " style="left:164px;top:2px;"><span style="letter-spacing:-0.05px">Discount</span><span style="letter-spacing:-1.67px">sC</span><span style="letter-spacing:0.32px">ode</span><span style="letter-spacing:-0.34px">Bxgy</span></span>
</div>
<div class="tr" style="top:483px">
<svg class="i" style="left:127px;top:6px" width="8" height="12" viewBox="0 0 8 12"><path d="M2 2.600l3.200 3.500l-3.200 3.500" fill="none" stroke="#8e8e8e" stroke-width="1.100"/></svg>
<svg class="i" style="left:144px;top:5px" width="14" height="11" viewBox="0 0 14 11"><rect x=".6" y=".6" width="12.800" height="9.800" rx="1.700" fill="#fff" stroke="#1a8fd6" stroke-width="1.200"/><path d="M.6 2.800v-.7c0-1 .5-1.500 1.500-1.500h9.800c1 0 1.500.5 1.500 1.500v.7z" fill="#1a8fd6"/><rect x="1.200" y="2.700" width="11.600" height="3" fill="#62c0ea"/><path d="M.6 6.200h12.800M7 2.700v7.700" stroke="#1a8fd6" stroke-width="1.200"/></svg>
<span class="t " style="left:164px;top:2px;"><span style="letter-spacing:0.11px">DraftOrder</span><span style="letter-spacing:-1.50px">s</span></span>
</div>
<div class="tr" style="top:506px">
<svg class="i" style="left:127px;top:6px" width="8" height="12" viewBox="0 0 8 12"><path d="M2 2.600l3.200 3.500l-3.200 3.500" fill="none" stroke="#8e8e8e" stroke-width="1.100"/></svg>
<svg class="i" style="left:144px;top:5px" width="14" height="11" viewBox="0 0 14 11"><rect x=".6" y=".6" width="12.800" height="9.800" rx="1.700" fill="#fff" stroke="#1a8fd6" stroke-width="1.200"/><path d="M.6 2.800v-.7c0-1 .5-1.500 1.500-1.500h9.800c1 0 1.500.5 1.500 1.500v.7z" fill="#1a8fd6"/><rect x="1.200" y="2.700" width="11.600" height="3" fill="#62c0ea"/><path d="M.6 6.200h12.800M7 2.700v7.700" stroke="#1a8fd6" stroke-width="1.200"/></svg>
<span class="t " style="left:164px;top:2px;"><span style="letter-spacing:-2.16px">F</span><span style="letter-spacing:0.33px">ile</span><span style="letter-spacing:-1.50px">s</span></span>
</div>
<div class="tr" style="top:529px">
<svg class="i" style="left:127px;top:6px" width="8" height="12" viewBox="0 0 8 12"><path d="M2 2.600l3.200 3.500l-3.200 3.500" fill="none" stroke="#8e8e8e" stroke-width="1.100"/></svg>
<svg class="i" style="left:144px;top:5px" width="14" height="11" viewBox="0 0 14 11"><rect x=".6" y=".6" width="12.800" height="9.800" rx="1.700" fill="#fff" stroke="#1a8fd6" stroke-width="1.200"/><path d="M.6 2.800v-.7c0-1 .5-1.500 1.500-1.500h9.800c1 0 1.500.5 1.500 1.500v.7z" fill="#1a8fd6"/><rect x="1.200" y="2.700" width="11.600" height="3" fill="#62c0ea"/><path d="M.6 6.200h12.800M7 2.700v7.700" stroke="#1a8fd6" stroke-width="1.200"/></svg>
<span class="t " style="left:164px;top:2px;"><span style="letter-spacing:-1.25px">Fu</span><span style="letter-spacing:0.52px">lfillme</span><span style="letter-spacing:0.24px">nt</span><span style="letter-spacing:-1.25px">Ev</span><span style="letter-spacing:0.05px">ent</span><span style="letter-spacing:-1.50px">s</span></span>
</div>
<div class="tr sel" style="top:552px">
<svg class="i" style="left:127px;top:6px" width="8" height="12" viewBox="0 0 8 12"><path d="M2 2.600l3.200 3.500l-3.200 3.500" fill="none" stroke="#8e8e8e" stroke-width="1.100"/></svg>
<svg class="i" style="left:144px;top:5px" width="14" height="11" viewBox="0 0 14 11"><rect x=".6" y=".6" width="12.800" height="9.800" rx="1.700" fill="#fff" stroke="#1a8fd6" stroke-width="1.200"/><path d="M.6 2.800v-.7c0-1 .5-1.500 1.500-1.500h9.800c1 0 1.500.5 1.500 1.500v.7z" fill="#1a8fd6"/><rect x="1.200" y="2.700" width="11.600" height="3" fill="#62c0ea"/><path d="M.6 6.200h12.800M7 2.700v7.700" stroke="#1a8fd6" stroke-width="1.200"/></svg>
<span class="t " style="left:164px;top:2px;"><span style="letter-spacing:-1.25px">Fu</span><span style="letter-spacing:0.52px">lfillme</span><span style="letter-spacing:0.02px">ntOrder</span><span style="letter-spacing:-1.50px">s</span></span>
</div>
<div class="tr" style="top:575px">
<svg class="i" style="left:127px;top:6px" width="8" height="12" viewBox="0 0 8 12"><path d="M2 2.600l3.200 3.500l-3.200 3.500" fill="none" stroke="#8e8e8e" stroke-width="1.100"/></svg>
<svg class="i" style="left:144px;top:5px" width="14" height="11" viewBox="0 0 14 11"><rect x=".6" y=".6" width="12.800" height="9.800" rx="1.700" fill="#fff" stroke="#1a8fd6" stroke-width="1.200"/><path d="M.6 2.800v-.7c0-1 .5-1.500 1.500-1.500h9.800c1 0 1.500.5 1.500 1.500v.7z" fill="#1a8fd6"/><rect x="1.200" y="2.700" width="11.600" height="3" fill="#62c0ea"/><path d="M.6 6.200h12.800M7 2.700v7.700" stroke="#1a8fd6" stroke-width="1.200"/></svg>
<span class="t " style="left:164px;top:2px;"><span style="letter-spacing:-1.25px">Fu</span><span style="letter-spacing:0.52px">lfillme</span><span style="letter-spacing:-0.24px">ntServi</span><span style="letter-spacing:-0.78px">ces</span></span>
</div>
<div class="tr" style="top:598px">
<svg class="i" style="left:127px;top:6px" width="8" height="12" viewBox="0 0 8 12"><path d="M2 2.600l3.200 3.500l-3.200 3.500" fill="none" stroke="#8e8e8e" stroke-width="1.100"/></svg>
<svg class="i" style="left:144px;top:5px" width="14" height="11" viewBox="0 0 14 11"><rect x=".6" y=".6" width="12.800" height="9.800" rx="1.700" fill="#fff" stroke="#1a8fd6" stroke-width="1.200"/><path d="M.6 2.800v-.7c0-1 .5-1.500 1.500-1.500h9.800c1 0 1.500.5 1.500 1.500v.7z" fill="#1a8fd6"/><rect x="1.200" y="2.700" width="11.600" height="3" fill="#62c0ea"/><path d="M.6 6.200h12.800M7 2.700v7.700" stroke="#1a8fd6" stroke-width="1.200"/></svg>
<span class="t " style="left:164px;top:2px;"><span style="letter-spacing:-1.25px">Fu</span><span style="letter-spacing:0.52px">lfillme</span><span style="letter-spacing:0.24px">nt</span><span style="letter-spacing:-3.16px">T</span><span style="letter-spacing:-0.10px">rackingIn</span><span style="letter-spacing:0.74px">fo</span></span>
</div>
<div class="tr" style="top:621px">
<svg class="i" style="left:127px;top:6px" width="8" height="12" viewBox="0 0 8 12"><path d="M2 2.600l3.200 3.500l-3.200 3.500" fill="none" stroke="#8e8e8e" stroke-width="1.100"/></svg>
<svg class="i" style="left:144px;top:5px" width="14" height="11" viewBox="0 0 14 11"><rect x=".6" y=".6" width="12.800" height="9.800" rx="1.700" fill="#fff" stroke="#1a8fd6" stroke-width="1.200"/><path d="M.6 2.800v-.7c0-1 .5-1.500 1.500-1.500h9.800c1 0 1.500.5 1.500 1.500v.7z" fill="#1a8fd6"/><rect x="1.200" y="2.700" width="11.600" height="3" fill="#62c0ea"/><path d="M.6 6.200h12.800M7 2.700v7.700" stroke="#1a8fd6" stroke-width="1.200"/></svg>
<span class="t " style="left:164px;top:2px;"><span style="letter-spacing:-1.25px">Fu</span><span style="letter-spacing:0.52px">lfillme</span><span style="letter-spacing:0.24px">nt</span><span style="letter-spacing:-1.50px">s</span></span>
</div>
<div class="tr" style="top:644px">
<svg class="i" style="left:127px;top:6px" width="8" height="12" viewBox="0 0 8 12"><path d="M2 2.600l3.200 3.500l-3.200 3.500" fill="none" stroke="#8e8e8e" stroke-width="1.100"/></svg>
<svg class="i" style="left:144px;top:5px" width="14" height="11" viewBox="0 0 14 11"><rect x=".6" y=".6" width="12.800" height="9.800" rx="1.700" fill="#fff" stroke="#1a8fd6" stroke-width="1.200"/><path d="M.6 2.800v-.7c0-1 .5-1.500 1.500-1.500h9.800c1 0 1.500.5 1.500 1.500v.7z" fill="#1a8fd6"/><rect x="1.200" y="2.700" width="11.600" height="3" fill="#62c0ea"/><path d="M.6 6.200h12.800M7 2.700v7.700" stroke="#1a8fd6" stroke-width="1.200"/></svg>
<span class="t " style="left:164px;top:2px;"><span style="letter-spacing:-0.14px">Invent</span><span style="letter-spacing:0.02px">oryItemInventory</span><span style="letter-spacing:-0.56px">Levels</span></span>
</div>
<div class="tr" style="top:667px">
<svg class="i" style="left:127px;top:6px" width="8" height="12" viewBox="0 0 8 12"><path d="M2 2.600l3.200 3.500l-3.200 3.500" fill="none" stroke="#8e8e8e" stroke-width="1.100"/></svg>
<svg class="i" style="left:144px;top:5px" width="14" height="11" viewBox="0 0 14 11"><rect x=".6" y=".6" width="12.800" height="9.800" rx="1.700" fill="#fff" stroke="#1a8fd6" stroke-width="1.200"/><path d="M.6 2.800v-.7c0-1 .5-1.500 1.500-1.500h9.800c1 0 1.500.5 1.500 1.500v.7z" fill="#1a8fd6"/><rect x="1.200" y="2.700" width="11.600" height="3" fill="#62c0ea"/><path d="M.6 6.200h12.800M7 2.700v7.700" stroke="#1a8fd6" stroke-width="1.200"/></svg>
<span class="t " style="left:164px;top:2px;"><span style="letter-spacing:-0.14px">Invent</span><span style="letter-spacing:0.14px">oryItem</span><span style="letter-spacing:-1.50px">s</span></span>
</div>
</div>
<div style="left:418px;top:118px;width:21px;height:684px;background:#f0f0f0"></div>
<div style="left:426px;top:249px;width:6px;height:248px;background:#8b8b8b"></div>
<div style="left:1px;top:802px;width:438px;height:20px;background:#f0f0f0"></div>
<div style="left:22px;top:809px;width:344px;height:6px;background:#8b8b8b"></div>
</div>
<div class="abs">
<div class="tabbar" style="left:0;top:827px;width:440px;height:30px;background:linear-gradient(#ebebeb,#e3e3e3)"></div>
<div class="tab" style="left:1px;top:828px;width:160px;height:29px;background:#f0f0f0"></div>
<svg class="i" style="left:6px;top:836px" width="14" height="13" viewBox="0 0 14 13"><rect x=".6" y=".6" width="12.800" height="11.800" rx="1.200" fill="#5ec1ea" stroke="#1a8fd6" stroke-width="1.200"/><rect x=".6" y=".6" width="12.800" height="2.400" fill="#1a8fd6"/></svg>
<span class="t " style="left:25px;top:834px;"><span style="letter-spacing:-2.01px">P</span><span style="letter-spacing:0.22px">roject - </span><span style="letter-spacing:-0.67px">Gene</span><span style="letter-spacing:0.11px">ral</span></span>
<svg class="i" style="left:142px;top:838px" width="10" height="10" viewBox="0 0 10 10"><path d="M1.700 1.700l6.600 6.600M8.300 1.700l-6.600 6.600" stroke="#5e5e5e" stroke-width="3.100" stroke-linecap="square"/><path d="M1.700 1.700l6.600 6.600M8.300 1.700l-6.600 6.600" stroke="#fff" stroke-width="1.500" stroke-linecap="square"/></svg>
<svg class="i" style="left:301px;top:832px" width="16" height="16" viewBox="0 0 16 16"><path d="M5.600 3.200l.700-2.700h3.400l.700 2.700z" fill="#1a8fd6" transform="rotate(0 8 8)"/><path d="M5.600 3.200l.700-2.700h3.400l.700 2.700z" fill="#1a8fd6" transform="rotate(60 8 8)"/><path d="M5.600 3.200l.700-2.700h3.400l.700 2.700z" fill="#1a8fd6" transform="rotate(120 8 8)"/><path d="M5.600 3.200l.700-2.700h3.400l.700 2.700z" fill="#1a8fd6" transform="rotate(180 8 8)"/><path d="M5.600 3.200l.700-2.700h3.400l.700 2.700z" fill="#1a8fd6" transform="rotate(240 8 8)"/><path d="M5.600 3.200l.700-2.700h3.400l.700 2.700z" fill="#1a8fd6" transform="rotate(300 8 8)"/><circle cx="8" cy="8" r="5.500" fill="#1a8fd6"/><path d="M8 4.700l3.300 3.300l-3.300 3.300l-3.300-3.300z" fill="#6fcdf3"/></svg>
<svg class="i" style="left:326px;top:838px" width="14" height="6" viewBox="0 0 14 6"><path d="M2.5 1h10.300v1.300" fill="none" stroke="#2e80d2" stroke-width="1"/><path d="M0 3.800h11" stroke="#2e80d2" stroke-width="1.900"/></svg>
<svg class="i" style="left:349px;top:833px" width="14" height="14" viewBox="0 0 14 14"><path d="M6 3.500v9.500M1.200 8.200h9.600" stroke="#2e80d2" stroke-width="2"/><path d="M8.300 1.300h1.800v3.300h2.500v1.500" stroke="#2e80d2" stroke-width="1" fill="none"/></svg>
<svg class="i" style="left:370px;top:833px" width="16" height="13" viewBox="0 0 16 13"><path d="M6 4.300h6.500" stroke="#2e80d2" stroke-width="1.900"/><path d="M11 1l4.300 3.300l-4.300 3.300z" fill="#2e80d2"/><path d="M3.500 8.800h6.500" stroke="#1e9e3a" stroke-width="1.900"/><path d="M5 5.500l-4.300 3.300l4.300 3.300z" fill="#1e9e3a"/></svg>
<svg class="i" style="left:396px;top:835px" width="11" height="5" viewBox="0 0 11 5"><rect x=".5" y=".5" width="9" height="3" fill="#fff" stroke="#666" stroke-width="1"/></svg>
<svg class="i" style="left:419px;top:835px" width="11" height="11" viewBox="0 0 11 11"><rect x=".5" y=".5" width="9" height="9" fill="#fff" stroke="#555" stroke-width="1"/><path d="M.5 2h9" stroke="#555" stroke-width="1.4"/></svg>
<div style="left:0;top:857px;width:440px;height:137px;border:1px solid #d6d6d6;border-top:none;background:#fff"></div>
<div style="left:260px;top:857px;width:1px;height:26px;background:#e0e0e0"></div>
<div style="left:438px;top:857px;width:1px;height:26px;background:#e0e0e0"></div>
<span class="t " style="left:7px;top:861px;"><span style="letter-spacing:-0.00px">Name</span></span>
<span class="t " style="left:267px;top:861px;"><span style="letter-spacing:0.08px">Data</span><span style="letter-spacing:-2.01px">S</span><span style="letter-spacing:-0.10px">ource</span></span>
<svg class="i" style="left:9px;top:890px" width="8" height="12" viewBox="0 0 8 12"><path d="M2 2.600l3.200 3.500l-3.200 3.500" fill="none" stroke="#8e8e8e" stroke-width="1.100"/></svg>
<svg class="i" style="left:24px;top:886px" width="17" height="16" viewBox="0 0 17 16"><path d="M.8 2h5l1 1.5h7.4v9h-13.4z" fill="#f6a35a" stroke="#f5871f" stroke-width="1"/><path d="M2.5 6h10M2.5 8.5h10" stroke="#fbd0a8" stroke-width="1"/><path d="M12.5 9l1 2.2l2.3.2l-1.8 1.5l.6 2.3l-2.1-1.3l-2.1 1.3l.6-2.3l-1.8-1.5l2.3-.2z" fill="#f5871f" stroke="#fff" stroke-width=".6"/></svg>
<span class="t " style="left:45px;top:885px;"><span style="letter-spacing:-0.07px">Bookmark</span><span style="letter-spacing:-1.50px">s</span></span>
<svg class="i" style="left:9px;top:913px" width="8" height="12" viewBox="0 0 8 12"><path d="M2 2.600l3.200 3.500l-3.200 3.500" fill="none" stroke="#8e8e8e" stroke-width="1.100"/></svg>
<svg class="i" style="left:24px;top:909px" width="15" height="14" viewBox="0 0 15 14"><path d="M.8 1.5h5l1 1.5h7.4v10h-13.4z" fill="#f5871f"/><rect x="2.5" y="6" width="4" height="4.5" fill="none" stroke="#fff" stroke-width="1.1"/><rect x="8.5" y="6" width="4" height="4.5" fill="none" stroke="#fff" stroke-width="1.1"/></svg>
<span class="t " style="left:45px;top:908px;"><span style="letter-spacing:-1.92px">ER</span><span style="letter-spacing:0.14px"> Diagram</span><span style="letter-spacing:-1.50px">s</span></span>
<svg class="i" style="left:9px;top:936px" width="8" height="12" viewBox="0 0 8 12"><path d="M2 2.600l3.200 3.500l-3.200 3.500" fill="none" stroke="#8e8e8e" stroke-width="1.100"/></svg>
<svg class="i" style="left:24px;top:932px" width="15" height="14" viewBox="0 0 15 14"><path d="M.8 1.5h5l1 1.5h7.4v10h-13.4z" fill="#f5871f"/><path d="M6 5.5h4.5M9 5.5v4.5c0 1-.6 1.5-1.5 1.5h-3.5M5.5 6v4" stroke="#fff" stroke-width="1.1" fill="none"/></svg>
<span class="t " style="left:45px;top:931px;"><span style="letter-spacing:-1.25px">Sc</span><span style="letter-spacing:0.54px">ript</span><span style="letter-spacing:-1.50px">s</span></span>
</div>
<div class="abs">
<div class="tabbar" style="left:444px;top:88px;width:1474px;height:30px;background:linear-gradient(#ebebeb,#e3e3e3)"></div>
<div class="tab" style="left:445px;top:89px;width:164px;height:29px;background:#f0f0f0"></div>
<svg class="i" style="left:450px;top:98px" width="14" height="11" viewBox="0 0 14 11"><rect x=".6" y=".6" width="12.800" height="9.800" rx="1.700" fill="#fff" stroke="#1a8fd6" stroke-width="1.200"/><path d="M.6 2.800v-.7c0-1 .5-1.500 1.500-1.500h9.800c1 0 1.500.5 1.500 1.500v.7z" fill="#1a8fd6"/><rect x="1.200" y="2.700" width="11.600" height="3" fill="#62c0ea"/><path d="M.6 6.200h12.800M7 2.700v7.700" stroke="#1a8fd6" stroke-width="1.200"/></svg>
<span class="t " style="left:469px;top:95px;"><span style="letter-spacing:-1.25px">Fu</span><span style="letter-spacing:0.52px">lfillme</span><span style="letter-spacing:0.02px">ntOrder</span><span style="letter-spacing:-1.50px">s</span></span>
<svg class="i" style="left:591px;top:99px" width="10" height="10" viewBox="0 0 10 10"><path d="M1.700 1.700l6.600 6.600M8.300 1.700l-6.600 6.600" stroke="#5e5e5e" stroke-width="3.100" stroke-linecap="square"/><path d="M1.700 1.700l6.600 6.600M8.300 1.700l-6.600 6.600" stroke="#fff" stroke-width="1.500" stroke-linecap="square"/></svg>
<svg class="i" style="left:1876px;top:96px" width="11" height="5" viewBox="0 0 11 5"><rect x=".5" y=".5" width="9" height="3" fill="#fff" stroke="#666" stroke-width="1"/></svg>
<svg class="i" style="left:1899px;top:96px" width="11" height="11" viewBox="0 0 11 11"><rect x=".5" y=".5" width="9" height="9" fill="#fff" stroke="#555" stroke-width="1"/><path d="M.5 2h9" stroke="#555" stroke-width="1.4"/></svg>
<div style="left:444px;top:117px;width:1474px;height:877px;background:#e6e6e6;border-left:1px solid #d6d6d6;border-bottom:1px solid #d6d6d6"></div>
<div style="left:445px;top:185px;width:28px;height:808px;background:#e6e6e6"></div>
<div style="left:445px;top:118px;width:1473px;height:36px;background:#e6e6e6;border-bottom:1px solid #9c9c9c"></div>
<div style="left:540px;top:118px;width:60px;height:36px;background:#e8e8e8;border:1px solid #9c9c9c;border-bottom:none;border-radius:4px 4px 0 0"></div>
<div style="left:706px;top:118px;width:1px;height:35px;background:#a8a8a8"></div>
<svg class="i" style="left:450px;top:130px" width="14" height="11" viewBox="0 0 14 11"><rect x=".6" y=".6" width="12.800" height="9.800" rx="1.700" fill="#fff" stroke="#1a8fd6" stroke-width="1.200"/><path d="M.6 2.800v-.7c0-1 .5-1.500 1.500-1.500h9.800c1 0 1.500.5 1.500 1.500v.7z" fill="#1a8fd6"/><rect x="1.200" y="2.700" width="11.600" height="3" fill="#62c0ea"/><path d="M.6 6.200h12.800M7 2.700v7.700" stroke="#1a8fd6" stroke-width="1.200"/></svg>
<span class="t " style="left:469px;top:127px;"><span style="letter-spacing:-2.01px">P</span><span style="letter-spacing:0.27px">ropertie</span><span style="letter-spacing:-1.50px">s</span></span>
<svg class="i" style="left:545px;top:129px" width="16" height="14" viewBox="0 0 16 14"><rect x=".7" y=".7" width="11" height="9.6" fill="#fff" stroke="#1a8fd6" stroke-width="1.3"/><rect x=".7" y=".7" width="11" height="2.4" fill="#1a8fd6"/><path d="M.7 6h11M4.5 3v7" stroke="#1a8fd6" stroke-width="1.1"/><rect x="7" y="6.5" width="9" height="8" fill="#f0f0f0"/><path d="M10 8.5l-2 2.2l2 2.2M13 8.5l2 2.2l-2 2.2" stroke="#1a8fd6" stroke-width="1.2" fill="none"/></svg>
<span class="t " style="left:564px;top:127px;"><span style="letter-spacing:0.08px">Data</span></span>
<svg class="i" style="left:603px;top:128px" width="18" height="16" viewBox="0 0 18 16"><rect x="7.100" y=".6" width="3.400" height="5" fill="#7fd0f5" stroke="#1a8fd6" stroke-width="1.100"/><path d="M8.8 5.3v3M2.8 11v-2.7h12.2v2.7M8.8 8.3v2.7" fill="none" stroke="#1a8fd6" stroke-width="1.1"/><rect x=".7" y="11" width="4.2" height="4.2" fill="#fff" stroke="#1a8fd6" stroke-width="1.1"/><rect x="6.7" y="11" width="4.2" height="4.2" fill="#fff" stroke="#1a8fd6" stroke-width="1.1"/><rect x="12.7" y="11" width="4.2" height="4.2" fill="#fff" stroke="#1a8fd6" stroke-width="1.1"/></svg>
<span class="t " style="left:624px;top:127px;"><span style="letter-spacing:-1.92px">ER</span><span style="letter-spacing:0.14px"> Diagram</span></span>
<div style="left:1364px;top:119px;width:554px;height:34px;background:#f0f0f0"></div>
<svg class="i" style="left:1367px;top:129px" width="17" height="16" viewBox="0 0 17 16"><ellipse cx="6.5" cy="2.8" rx="5.5" ry="2.2" fill="#b9b9b9" stroke="#8e8e8e" stroke-width=".6"/><path d="M1 4.5c0 3 11 3 11 0v2.5c0 3-11 3-11 0z" fill="#8b8b8b"/><path d="M1 8.5c0 3 11 3 11 0v2.5c0 3-11 3-11 0z" fill="#8b8b8b"/><rect x="8.5" y="8" width="7" height="7" fill="#28a745"/><path d="M10 11.5l1.6 1.8l2.6-3.6" stroke="#fff" stroke-width="1.3" fill="none"/></svg>
<span class="t " style="left:1387px;top:127px;"><span style="letter-spacing:-1.17px">Sh</span><span style="letter-spacing:0.46px">opify</span></span>
<svg class="i" style="left:1449px;top:129px" width="14" height="15" viewBox="0 0 14 15"><ellipse cx="7" cy="3" rx="6.3" ry="2.6" fill="#1a8fd6"/><path d="M.7 5.2c0 3.2 12.6 3.2 12.6 0v2.4c0 3.4-12.6 3.4-12.6 0z" fill="#1a8fd6"/><path d="M.7 9.2c0 3.2 12.6 3.2 12.6 0v2.4c0 3.4-12.6 3.4-12.6 0z" fill="#1a8fd6"/></svg>
<span class="t " style="left:1468px;top:127px;"><span style="letter-spacing:-0.83px">CD</span><span style="letter-spacing:0.05px">ata</span></span>
<svg class="i" style="left:1521px;top:129px" width="13" height="16" viewBox="0 0 13 16"><path d="M1.700 .8h6.500l3.300 3.300v9.600c0 .7-.4 1.100-1.100 1.100h-8.700c-.7 0-1.100-.4-1.100-1.100v-11.800c0-.7.4-1.100 1.100-1.100z" fill="none" stroke="#1a8fd6" stroke-width="1.200" stroke-linejoin="round"/><path d="M2.800 5.700h2.600M2.800 8.400h2.600M2.800 11.100h2.600" stroke="#1a8fd6" stroke-width="1"/><path d="M6.600 5.700h3M6.600 8.400h3M6.600 11.100h3" stroke="#1a8fd6" stroke-width="1.900"/></svg>
<span class="t " style="left:1540px;top:127px;"><span style="letter-spacing:-1.38px">GRAP</span><span style="letter-spacing:-0.61px">HQL</span><span style="letter-spacing:0.04px">-2024-0</span><span style="letter-spacing:-0.34px">7</span></span>
<svg class="i" style="left:1682px;top:130px" width="14" height="12" viewBox="0 0 14 12"><path d="M.7 1.300h4.600l1 1.500h7v8.400h-12.600z" fill="#fff" stroke="#f5871f" stroke-width="1.300" stroke-linejoin="round"/><path d="M.7 5.600h12.600M.7 8.400h12.600M5 5.600v5.600" stroke="#f5871f" stroke-width="1.200"/><path d="M.7 1.300h4.600l1 1.500v.6h-5.600z" fill="#f5871f"/></svg>
<span class="t " style="left:1701px;top:127px;"><span style="letter-spacing:-3.16px">T</span><span style="letter-spacing:0.16px">able</span><span style="letter-spacing:-1.50px">s</span></span>
<div class="dd" style="left:1756px;top:134px"></div>
<svg class="i" style="left:1775px;top:130px" width="14" height="11" viewBox="0 0 14 11"><rect x=".6" y=".6" width="12.800" height="9.800" rx="1.700" fill="#fff" stroke="#1a8fd6" stroke-width="1.200"/><path d="M.6 2.800v-.7c0-1 .5-1.500 1.500-1.500h9.800c1 0 1.500.5 1.500 1.500v.7z" fill="#1a8fd6"/><rect x="1.200" y="2.700" width="11.600" height="3" fill="#62c0ea"/><path d="M.6 6.200h12.800M7 2.700v7.700" stroke="#1a8fd6" stroke-width="1.200"/></svg>
<span class="t " style="left:1794px;top:127px;"><span style="letter-spacing:-1.25px">Fu</span><span style="letter-spacing:0.52px">lfillme</span><span style="letter-spacing:0.02px">ntOrder</span><span style="letter-spacing:-1.50px">s</span></span>
<div style="left:448px;top:157px;width:1242px;height:25px;background:#fff;border:1px solid #b2b2b2"></div>
<svg class="i" style="left:453px;top:162px" width="14" height="11" viewBox="0 0 14 11"><rect x=".6" y=".6" width="12.800" height="9.800" rx="1.700" fill="#fff" stroke="#1a8fd6" stroke-width="1.200"/><path d="M.6 2.800v-.7c0-1 .5-1.500 1.500-1.500h9.800c1 0 1.500.5 1.500 1.500v.7z" fill="#1a8fd6"/><rect x="1.200" y="2.700" width="11.600" height="3" fill="#62c0ea"/><path d="M.6 6.200h12.800M7 2.700v7.700" stroke="#1a8fd6" stroke-width="1.200"/></svg>
<span class="t " style="left:470px;top:161px;color:#2a8a0c"><span style="letter-spacing:-1.25px">Fu</span><span style="letter-spacing:0.52px">lfillme</span><span style="letter-spacing:0.02px">ntOrder</span><span style="letter-spacing:-1.50px">s</span></span>
<div style="left:590px;top:161px;width:1px;height:16px;background:#9a9a9a"></div>
<svg class="i" style="left:595px;top:162px" width="15" height="15" viewBox="0 0 15 15"><path d="M1 5v-4h4M1 1l4 4M14 5v-4h-4M14 1l-4 4M1 10v4h4M1 14l4-4M14 10v4h-4M14 14l-4-4" fill="none" stroke="#666" stroke-width="1.500"/></svg>
<span class="t " style="left:616px;top:161px;font-style:italic;color:#a8a8a8"><span style="letter-spacing:-1.48px">En</span><span style="letter-spacing:-0.25px">ter a </span><span style="letter-spacing:-1.67px">SQL</span><span style="letter-spacing:-0.38px"> expre</span><span style="letter-spacing:-1.73px">ss</span><span style="letter-spacing:0.18px">ion to filte</span><span style="letter-spacing:-0.46px">r resul</span><span style="letter-spacing:0.64px">t</span><span style="letter-spacing:-0.80px">s (use </span><span style="letter-spacing:-2.18px">C</span><span style="letter-spacing:0.45px">trl+</span><span style="letter-spacing:-2.31px">S</span><span style="letter-spacing:-0.39px">pace)</span></span>
<svg class="i" style="left:1651px;top:163px" width="8" height="13"><path d="M0 0l6.500 6.500l-6.500 6.500z" fill="#8a8a8a"/></svg>
<div style="left:1668px;top:161px;width:1px;height:16px;background:#777"></div>
<div class="dd g" style="left:1673px;top:167px"></div>
<svg class="i" style="left:1698px;top:161px" width="17" height="16" viewBox="0 0 17 16"><path d="M9.800 .8l5.200 4.400l-6.500 7.600h-3l-3.700-3.200z" fill="#f2f2f2" stroke="#a6a6a6" stroke-width="1.200" stroke-linejoin="round"/><path d="M9.800 .8l5.200 4.400l-3.800 4.400l-5.200-4.400z" fill="#a6a6a6"/><path d="M10.500 13.600h4.500" stroke="#a6a6a6" stroke-width="1.200"/></svg>
<svg class="i" style="left:1720px;top:161px" width="18" height="16" viewBox="0 0 18 16"><path d="M1.300 .8h11.400l-4.200 5.600v6.800l-3-2.600v-4.200z" fill="#6fcbf3" stroke="#1a8fd6" stroke-width="1.300" stroke-linejoin="round"/><rect x="11.200" y="8.600" width="4.800" height="4.800" fill="#fff" stroke="#1e9e3a" stroke-width="1.500"/></svg>
<svg class="i" style="left:1745px;top:161px" width="18" height="16" viewBox="0 0 18 16"><rect x=".7" y=".7" width="12.600" height="12.200" fill="#fff" stroke="#1a8fd6" stroke-width="1.300"/><rect x=".7" y=".7" width="12.600" height="2.800" fill="#1a8fd6"/><rect x="1.300" y="3.500" width="3.500" height="9" fill="#7fcff5"/><path d="M.7 8h4.500M5 3.500v9.400" stroke="#1a8fd6" stroke-width="1.100"/><circle cx="12.200" cy="11.700" r="4.600" fill="#e6e6e6"/><rect x="11.300" y="7.600" width="1.800" height="8.200" fill="#1a8fd6" transform="rotate(0 12.200 11.700)"/><rect x="11.300" y="7.600" width="1.800" height="8.200" fill="#1a8fd6" transform="rotate(45 12.200 11.700)"/><rect x="11.300" y="7.600" width="1.800" height="8.200" fill="#1a8fd6" transform="rotate(90 12.200 11.700)"/><rect x="11.300" y="7.600" width="1.800" height="8.200" fill="#1a8fd6" transform="rotate(135 12.200 11.700)"/><circle cx="12.200" cy="11.700" r="3" fill="#1a8fd6"/><circle cx="12.200" cy="11.700" r="1.200" fill="#fff"/></svg>
<div class="hd" style="left:1765px;top:161px;height:15px;background:repeating-linear-gradient(#c9b9a8 0 2px,transparent 2px 4px)"></div>
<svg class="i" style="left:1776px;top:160px" width="16" height="16" viewBox="0 0 16 16"><g transform="rotate(40 8 8)"><rect x="2.300" y="3.600" width="11.400" height="8.800" rx="2.600" fill="#f7fbfe" stroke="#1a8fd6" stroke-width="1.700"/><path d="M7.800 1.300l2.800 2.300l-2.800 2.300z" fill="#1a8fd6"/><path d="M8.200 10.100l-2.800 2.300l2.800 2.300z" fill="#1a8fd6"/><path d="M4.300 8.700h2.600l1.600-1.600h3" fill="none" stroke="#1a8fd6" stroke-width="1.500"/><path d="M5.800 6.800l-1.800 1.900l1.800 1.900M10.200 5.200l1.800 1.900l-1.800 1.900" fill="none" stroke="#1a8fd6" stroke-width="1.100"/></g></svg>
<div class="dd" style="left:1798px;top:166px"></div>
<div class="hd" style="left:1815px;top:161px;height:15px;background:repeating-linear-gradient(#c9b9a8 0 2px,transparent 2px 4px)"></div>
<svg class="i" style="left:1827px;top:164px" width="14" height="9" viewBox="0 0 14 9"><path d="M0 4.500l5.500-4.500v3h8.500v3h-8.500v3z" fill="#a0a0a0"/></svg>
<div class="dd g" style="left:1849px;top:166px"></div>
<svg class="i" style="left:1869px;top:164px" width="14" height="9" viewBox="0 0 14 9"><path d="M14 4.500l-5.500-4.500v3h-8.500v3h8.500v3z" fill="#a0a0a0"/></svg>
<div class="dd g" style="left:1891px;top:166px"></div>
<div style="left:447px;top:185px;width:24px;height:66px;background:#e2e2e2;border:1px solid #b9b9b9"></div>
<span class="t " style="left:449px;top:224px;transform:rotate(-90deg);transform-origin:0 0;"><span style="letter-spacing:-0.83px">Gr</span><span style="letter-spacing:0.66px">id</span></span>
<svg class="i" style="left:450px;top:228px" width="14" height="14" viewBox="0 0 14 14"><rect x=".6" y=".6" width="12.800" height="12.800" fill="#fff" stroke="#1a8fd6" stroke-width="1.200"/><path d="M.6 4.900h12.800M.6 9.100h12.800M4.900 .6v12.800M9.100 .6v12.800" stroke="#1a8fd6" stroke-width="1.100"/></svg>
<span class="t " style="left:449px;top:291px;transform:rotate(-90deg);transform-origin:0 0;"><span style="letter-spacing:-3.16px">T</span><span style="letter-spacing:-0.00px">ext</span></span>
<svg class="i" style="left:452px;top:294px" width="13" height="17" viewBox="0 0 13 17"><path d="M1 .5v9M1 5h9.500M10.500 2.500v5" stroke="#1a8fd6" stroke-width="1.200" fill="none"/><path d="M4 11.800l2.500-2.300l2.500 2.300M4 13.500l2.500 2.300l2.500-2.300" stroke="#1a8fd6" stroke-width="1.200" fill="none"/></svg>
<span class="t " style="left:449px;top:940px;transform:rotate(-90deg);transform-origin:0 0;"><span style="letter-spacing:-0.89px">Rec</span><span style="letter-spacing:0.44px">ord</span></span>
<svg class="i" style="left:450px;top:943px" width="16" height="15" viewBox="0 0 16 15"><path d="M.8 6.500l3-3.500h6" fill="none" stroke="#1a8fd6" stroke-width="1.300"/><rect x=".8" y="6" width="12.700" height="8.200" fill="#fff" stroke="#1a8fd6" stroke-width="1.300"/><circle cx="11.800" cy="3.600" r="3.400" fill="#1a8fd6"/><path d="M10 3.600h3.600" stroke="#fff" stroke-width="1.200"/></svg>
<div id="grid">
<div class="hc" style="left:0;width:31px;border-right:none"></div>
<div class="hc" style="left:32px;width:300px;background:#7db9ea">
<svg class="i" style="left:6px;top:8px" width="22" height="14" viewBox="0 0 22 14"><text x="0" y="7.300" font-family="Liberation Sans" font-size="9.500" style="font-weight:bold" stroke="#c9e6fa" stroke-width=".3" fill="#c9e6fa" textLength="15" lengthAdjust="spacingAndGlyphs">ABC</text><rect x="8.500" y="4" width="8.500" height="9.500" fill="#1f8ad4"/><circle cx="12.700" cy="7.800" r="1.600" fill="none" stroke="#fff" stroke-width="1"/><path d="M12.700 9.400v2.600M12.700 11h1.300" stroke="#fff" stroke-width="1"/></svg>
<span class="t " style="left:25px;top:7px;"><span style="letter-spacing:0.24px">Id</span></span>
<svg class="i" style="left:280px;top:6px" width="17" height="15" viewBox="0 0 17 15"><path d="M.5 1.600h7.300l-2.300 3.800v8l-2.500-2.200v-5.800z" fill="#8fd2f4" stroke="#2b95d6" stroke-width="1" stroke-linejoin="round"/><path d="M13 4v3M13 9v3" stroke="#2b8fd8" stroke-width="1.700"/><path d="M9.800 5l3.200-3.800l3.200 3.800zM9.800 11l3.200 3.800l3.200-3.800z" fill="#2b8fd8"/></svg>
</div>
<div class="hc" style="left:332px;width:96px">
<svg class="i" style="left:6px;top:10px" width="17" height="8" viewBox="0 0 17 8"><text x="0" y="7.300" font-family="Liberation Sans" font-size="9.500" style="font-weight:bold" stroke="#2b95d6" stroke-width=".35" fill="#2b95d6" textLength="16.500" lengthAdjust="spacingAndGlyphs">ABC</text></svg>
<span class="t " style="left:25px;top:7px;"><span style="letter-spacing:-2.01px">S</span><span style="letter-spacing:0.24px">tatu</span><span style="letter-spacing:-1.50px">s</span></span>
<svg class="i" style="left:76px;top:6px" width="17" height="15" viewBox="0 0 17 15"><path d="M.5 1.600h7.300l-2.300 3.800v8l-2.500-2.200v-5.800z" fill="#8fd2f4" stroke="#2b95d6" stroke-width="1" stroke-linejoin="round"/><path d="M13 4v3M13 9v3" stroke="#2b8fd8" stroke-width="1.700"/><path d="M9.800 5l3.200-3.800l3.200 3.800zM9.800 11l3.200 3.800l3.200-3.800z" fill="#2b8fd8"/></svg>
</div>
<div class="hc" style="left:428px;width:107px">
<svg class="i" style="left:7px;top:7px" width="14" height="14" viewBox="0 0 14 14"><circle cx="7" cy="7" r="7" fill="#2e86d3"/><path d="M8.300 2.800v5.200l-3.800 1.700" stroke="#fff" stroke-width="1.200" fill="none"/></svg>
<span class="t " style="left:25px;top:7px;"><span style="letter-spacing:-1.25px">Fu</span><span style="letter-spacing:0.62px">lfillAt</span></span>
<svg class="i" style="left:87px;top:6px" width="17" height="15" viewBox="0 0 17 15"><path d="M.5 1.600h7.300l-2.300 3.800v8l-2.500-2.200v-5.800z" fill="#8fd2f4" stroke="#2b95d6" stroke-width="1" stroke-linejoin="round"/><path d="M13 4v3M13 9v3" stroke="#2b8fd8" stroke-width="1.700"/><path d="M9.800 5l3.200-3.800l3.200 3.800zM9.800 11l3.200 3.800l3.200-3.800z" fill="#2b8fd8"/></svg>
</div>
<div class="hc" style="left:535px;width:108px">
<svg class="i" style="left:7px;top:7px" width="14" height="14" viewBox="0 0 14 14"><circle cx="7" cy="7" r="7" fill="#2e86d3"/><path d="M8.300 2.800v5.200l-3.800 1.700" stroke="#fff" stroke-width="1.200" fill="none"/></svg>
<span class="t " style="left:25px;top:7px;"><span style="letter-spacing:-1.25px">Fu</span><span style="letter-spacing:0.70px">lfill</span><span style="letter-spacing:-0.75px">By</span></span>
<svg class="i" style="left:88px;top:6px" width="17" height="15" viewBox="0 0 17 15"><path d="M.5 1.600h7.300l-2.300 3.800v8l-2.500-2.200v-5.800z" fill="#8fd2f4" stroke="#2b95d6" stroke-width="1" stroke-linejoin="round"/><path d="M13 4v3M13 9v3" stroke="#2b8fd8" stroke-width="1.700"/><path d="M9.800 5l3.200-3.800l3.200 3.800zM9.800 11l3.200 3.800l3.200-3.800z" fill="#2b8fd8"/></svg>
</div>
<div class="hc" style="left:643px;width:134px">
<svg class="i" style="left:6px;top:10px" width="17" height="8" viewBox="0 0 17 8"><text x="0" y="7.300" font-family="Liberation Sans" font-size="9.500" style="font-weight:bold" stroke="#2b95d6" stroke-width=".35" fill="#2b95d6" textLength="16.500" lengthAdjust="spacingAndGlyphs">ABC</text></svg>
<span class="t " style="left:25px;top:7px;"><span style="letter-spacing:-0.04px">OrderName</span></span>
<svg class="i" style="left:114px;top:6px" width="17" height="15" viewBox="0 0 17 15"><path d="M.5 1.600h7.300l-2.300 3.800v8l-2.500-2.200v-5.800z" fill="#8fd2f4" stroke="#2b95d6" stroke-width="1" stroke-linejoin="round"/><path d="M13 4v3M13 9v3" stroke="#2b8fd8" stroke-width="1.700"/><path d="M9.800 5l3.200-3.800l3.200 3.800zM9.800 11l3.200 3.800l3.200-3.800z" fill="#2b8fd8"/></svg>
</div>
<div class="hc" style="left:777px;width:149px">
<svg class="i" style="left:6px;top:10px" width="17" height="8" viewBox="0 0 17 8"><text x="0" y="7.300" font-family="Liberation Sans" font-size="9.500" style="font-weight:bold" stroke="#2b95d6" stroke-width=".35" fill="#2b95d6" textLength="16.500" lengthAdjust="spacingAndGlyphs">ABC</text></svg>
<span class="t " style="left:25px;top:7px;"><span style="letter-spacing:-1.09px">Re</span><span style="letter-spacing:-0.14px">quest</span><span style="letter-spacing:-2.01px">S</span><span style="letter-spacing:0.24px">tatu</span><span style="letter-spacing:-1.50px">s</span></span>
<svg class="i" style="left:129px;top:6px" width="17" height="15" viewBox="0 0 17 15"><path d="M.5 1.600h7.300l-2.300 3.800v8l-2.500-2.200v-5.800z" fill="#8fd2f4" stroke="#2b95d6" stroke-width="1" stroke-linejoin="round"/><path d="M13 4v3M13 9v3" stroke="#2b8fd8" stroke-width="1.700"/><path d="M9.800 5l3.200-3.800l3.200 3.800zM9.800 11l3.200 3.800l3.200-3.800z" fill="#2b8fd8"/></svg>
</div>
<div class="hc" style="left:926px;width:146px">
<svg class="i" style="left:7px;top:7px" width="14" height="14" viewBox="0 0 14 14"><circle cx="7" cy="7" r="7" fill="#2e86d3"/><path d="M8.300 2.800v5.200l-3.800 1.700" stroke="#fff" stroke-width="1.200" fill="none"/></svg>
<span class="t " style="left:25px;top:7px;"><span style="letter-spacing:-0.91px">Cr</span><span style="letter-spacing:0.08px">eatedA</span><span style="letter-spacing:0.83px">t</span></span>
<svg class="i" style="left:126px;top:6px" width="17" height="15" viewBox="0 0 17 15"><path d="M.5 1.600h7.300l-2.300 3.800v8l-2.500-2.200v-5.800z" fill="#8fd2f4" stroke="#2b95d6" stroke-width="1" stroke-linejoin="round"/><path d="M13 4v3M13 9v3" stroke="#2b8fd8" stroke-width="1.700"/><path d="M9.800 5l3.200-3.800l3.200 3.800zM9.800 11l3.200 3.800l3.200-3.800z" fill="#2b8fd8"/></svg>
</div>
<div class="hc" style="left:1072px;width:146px">
<svg class="i" style="left:7px;top:7px" width="14" height="14" viewBox="0 0 14 14"><circle cx="7" cy="7" r="7" fill="#2e86d3"/><path d="M8.300 2.800v5.200l-3.800 1.700" stroke="#fff" stroke-width="1.200" fill="none"/></svg>
<span class="t " style="left:25px;top:7px;"><span style="letter-spacing:0.16px">UpdatedA</span><span style="letter-spacing:0.83px">t</span></span>
<svg class="i" style="left:126px;top:6px" width="17" height="15" viewBox="0 0 17 15"><path d="M.5 1.600h7.300l-2.300 3.800v8l-2.500-2.200v-5.800z" fill="#8fd2f4" stroke="#2b95d6" stroke-width="1" stroke-linejoin="round"/><path d="M13 4v3M13 9v3" stroke="#2b8fd8" stroke-width="1.700"/><path d="M9.800 5l3.200-3.800l3.200 3.800zM9.800 11l3.200 3.800l3.200-3.800z" fill="#2b8fd8"/></svg>
</div>
<div class="hc" style="left:1218px;width:175px">
<svg class="i" style="left:7px;top:7px" width="14" height="14" viewBox="0 0 14 14"><circle cx="7" cy="7" r="7" fill="#2e86d3"/><path d="M8.300 2.800v5.200l-3.800 1.700" stroke="#fff" stroke-width="1.200" fill="none"/></svg>
<span class="t " style="left:25px;top:7px;"><span style="letter-spacing:-0.25px">OrderProce</span><span style="letter-spacing:-1.11px">sse</span><span style="letter-spacing:0.49px">dAt</span></span>
<svg class="i" style="left:155px;top:6px" width="17" height="15" viewBox="0 0 17 15"><path d="M.5 1.600h7.300l-2.300 3.800v8l-2.500-2.200v-5.800z" fill="#8fd2f4" stroke="#2b95d6" stroke-width="1" stroke-linejoin="round"/><path d="M13 4v3M13 9v3" stroke="#2b8fd8" stroke-width="1.700"/><path d="M9.800 5l3.200-3.800l3.200 3.800zM9.800 11l3.200 3.800l3.200-3.800z" fill="#2b8fd8"/></svg>
</div>
<div class="rn" style="top:32px;background:#7db9ea"><span class="t " style="left:4.5px;top:2px;font-weight:bold;"><span style="letter-spacing:0.66px">1</span></span></div>
<div class="row o" style="top:32px">
<div class="c" style="left:0px;width:300px;background:#70aee3;border:solid #000;border-width:1px;color:#fff;left:0;width:299px;top:0;height:23px"><span class="t " style="left:4px;top:1px;"><span style="letter-spacing:0.66px">gid</span><span style="letter-spacing:-1.17px">:</span><span style="letter-spacing:1.83px">//</span><span style="letter-spacing:-0.92px">sh</span><span style="letter-spacing:0.46px">opify</span><span style="letter-spacing:1.83px">/</span><span style="letter-spacing:-1.25px">Fu</span><span style="letter-spacing:0.52px">lfillme</span><span style="letter-spacing:0.13px">ntOrder/31</span><span style="letter-spacing:-0.34px">576673487</span></span></div>
<div class="c" style="left:300px;width:96px"><span class="t " style="left:5px;top:2px;"><span style="letter-spacing:-1.57px">CLOSE</span><span style="letter-spacing:0.17px">D</span></span></div>
<div class="c" style="left:396px;width:107px"><span class="t nul" style="right:5px;top:2px;"><span style="letter-spacing:0.06px">[NU</span><span style="letter-spacing:-1.34px">LL</span><span style="letter-spacing:0.83px">]</span></span></div>
<div class="c" style="left:503px;width:108px"><span class="t nul" style="right:5px;top:2px;"><span style="letter-spacing:0.06px">[NU</span><span style="letter-spacing:-1.34px">LL</span><span style="letter-spacing:0.83px">]</span></span></div>
<div class="c" style="left:611px;width:134px"><span class="t " style="left:5px;top:2px;"><span style="letter-spacing:-0.14px">#1005</span></span></div>
<div class="c" style="left:745px;width:149px"><span class="t " style="left:5px;top:2px;"><span style="letter-spacing:-0.72px">UNSUBMITT</span><span style="letter-spacing:-2.01px">E</span><span style="letter-spacing:0.17px">D</span></span></div>
<div class="c" style="left:894px;width:146px"><span class="t " style="left:5px;top:2px;"><span style="letter-spacing:-0.12px">2019-09-24 01</span><span style="letter-spacing:-0.62px">:00:39</span></span></div>
<div class="c" style="left:1040px;width:146px"><span class="t " style="left:5px;top:2px;"><span style="letter-spacing:-0.12px">2023-04-11 12</span><span style="letter-spacing:-0.62px">:53:00</span></span></div>
<div class="c" style="left:1186px;width:175px"><span class="t " style="right:6px;top:2px;"><span style="letter-spacing:-0.12px">2017-09-19 15</span><span style="letter-spacing:-0.62px">:40:39</span></span></div>
</div>
<div class="rn" style="top:56px"><span class="t " style="left:4.5px;top:2px;"><span style="letter-spacing:-0.34px">2</span></span></div>
<div class="row" style="top:56px">
<div class="c" style="left:0px;width:300px"><span class="t " style="left:5px;top:2px;"><span style="letter-spacing:0.66px">gid</span><span style="letter-spacing:-1.17px">:</span><span style="letter-spacing:1.83px">//</span><span style="letter-spacing:-0.92px">sh</span><span style="letter-spacing:0.46px">opify</span><span style="letter-spacing:1.83px">/</span><span style="letter-spacing:-1.25px">Fu</span><span style="letter-spacing:0.52px">lfillme</span><span style="letter-spacing:0.13px">ntOrder/31</span><span style="letter-spacing:-0.34px">576676763</span></span></div>
<div class="c" style="left:300px;width:96px"><span class="t " style="left:5px;top:2px;"><span style="letter-spacing:-1.57px">CLOSE</span><span style="letter-spacing:0.17px">D</span></span></div>
<div class="c" style="left:396px;width:107px"><span class="t nul" style="right:5px;top:2px;"><span style="letter-spacing:0.06px">[NU</span><span style="letter-spacing:-1.34px">LL</span><span style="letter-spacing:0.83px">]</span></span></div>
<div class="c" style="left:503px;width:108px"><span class="t nul" style="right:5px;top:2px;"><span style="letter-spacing:0.06px">[NU</span><span style="letter-spacing:-1.34px">LL</span><span style="letter-spacing:0.83px">]</span></span></div>
<div class="c" style="left:611px;width:134px"><span class="t " style="left:5px;top:2px;"><span style="letter-spacing:-0.14px">#1005</span></span></div>
<div class="c" style="left:745px;width:149px"><span class="t " style="left:5px;top:2px;"><span style="letter-spacing:-0.72px">UNSUBMITT</span><span style="letter-spacing:-2.01px">E</span><span style="letter-spacing:0.17px">D</span></span></div>
<div class="c" style="left:894px;width:146px"><span class="t " style="left:5px;top:2px;"><span style="letter-spacing:-0.12px">2019-09-24 01</span><span style="letter-spacing:-0.62px">:00:39</span></span></div>
<div class="c" style="left:1040px;width:146px"><span class="t " style="left:5px;top:2px;"><span style="letter-spacing:-0.12px">2023-02-23 19</span><span style="letter-spacing:-0.62px">:10:37</span></span></div>
<div class="c" style="left:1186px;width:175px"><span class="t " style="right:6px;top:2px;"><span style="letter-spacing:-0.12px">2017-09-19 15</span><span style="letter-spacing:-0.62px">:40:39</span></span></div>
</div>
<div class="rn" style="top:80px"><span class="t " style="left:4.5px;top:2px;"><span style="letter-spacing:-0.34px">3</span></span></div>
<div class="row o" style="top:80px">
<div class="c" style="left:0px;width:300px"><span class="t " style="left:5px;top:2px;"><span style="letter-spacing:0.66px">gid</span><span style="letter-spacing:-1.17px">:</span><span style="letter-spacing:1.83px">//</span><span style="letter-spacing:-0.92px">sh</span><span style="letter-spacing:0.46px">opify</span><span style="letter-spacing:1.83px">/</span><span style="letter-spacing:-1.25px">Fu</span><span style="letter-spacing:0.52px">lfillme</span><span style="letter-spacing:0.13px">ntOrder/31</span><span style="letter-spacing:-0.34px">576689871</span></span></div>
<div class="c" style="left:300px;width:96px"><span class="t " style="left:5px;top:2px;"><span style="letter-spacing:-1.57px">CLOSE</span><span style="letter-spacing:0.17px">D</span></span></div>
<div class="c" style="left:396px;width:107px"><span class="t nul" style="right:5px;top:2px;"><span style="letter-spacing:0.06px">[NU</span><span style="letter-spacing:-1.34px">LL</span><span style="letter-spacing:0.83px">]</span></span></div>
<div class="c" style="left:503px;width:108px"><span class="t nul" style="right:5px;top:2px;"><span style="letter-spacing:0.06px">[NU</span><span style="letter-spacing:-1.34px">LL</span><span style="letter-spacing:0.83px">]</span></span></div>
<div class="c" style="left:611px;width:134px"><span class="t " style="left:5px;top:2px;"><span style="letter-spacing:-0.14px">#1007</span></span></div>
<div class="c" style="left:745px;width:149px"><span class="t " style="left:5px;top:2px;"><span style="letter-spacing:-0.72px">UNSUBMITT</span><span style="letter-spacing:-2.01px">E</span><span style="letter-spacing:0.17px">D</span></span></div>
<div class="c" style="left:894px;width:146px"><span class="t " style="left:5px;top:2px;"><span style="letter-spacing:-0.12px">2019-09-24 01</span><span style="letter-spacing:-0.62px">:00:39</span></span></div>
<div class="c" style="left:1040px;width:146px"><span class="t " style="left:5px;top:2px;"><span style="letter-spacing:-0.12px">2021-01-11 22</span><span style="letter-spacing:-0.62px">:51:39</span></span></div>
<div class="c" style="left:1186px;width:175px"><span class="t " style="right:6px;top:2px;"><span style="letter-spacing:-0.12px">2017-09-19 15</span><span style="letter-spacing:-0.62px">:40:39</span></span></div>
</div>
<div class="rn" style="top:104px"><span class="t " style="left:4.5px;top:2px;"><span style="letter-spacing:-0.34px">4</span></span></div>
<div class="row" style="top:104px">
<div class="c" style="left:0px;width:300px"><span class="t " style="left:5px;top:2px;"><span style="letter-spacing:0.66px">gid</span><span style="letter-spacing:-1.17px">:</span><span style="letter-spacing:1.83px">//</span><span style="letter-spacing:-0.92px">sh</span><span style="letter-spacing:0.46px">opify</span><span style="letter-spacing:1.83px">/</span><span style="letter-spacing:-1.25px">Fu</span><span style="letter-spacing:0.52px">lfillme</span><span style="letter-spacing:0.13px">ntOrder/31</span><span style="letter-spacing:-0.34px">576696424</span></span></div>
<div class="c" style="left:300px;width:96px"><span class="t " style="left:5px;top:2px;"><span style="letter-spacing:-1.57px">CLOSE</span><span style="letter-spacing:0.17px">D</span></span></div>
<div class="c" style="left:396px;width:107px"><span class="t nul" style="right:5px;top:2px;"><span style="letter-spacing:0.06px">[NU</span><span style="letter-spacing:-1.34px">LL</span><span style="letter-spacing:0.83px">]</span></span></div>
<div class="c" style="left:503px;width:108px"><span class="t nul" style="right:5px;top:2px;"><span style="letter-spacing:0.06px">[NU</span><span style="letter-spacing:-1.34px">LL</span><span style="letter-spacing:0.83px">]</span></span></div>
<div class="c" style="left:611px;width:134px"><span class="t " style="left:5px;top:2px;"><span style="letter-spacing:-0.14px">#1007</span></span></div>
<div class="c" style="left:745px;width:149px"><span class="t " style="left:5px;top:2px;"><span style="letter-spacing:-0.72px">UNSUBMITT</span><span style="letter-spacing:-2.01px">E</span><span style="letter-spacing:0.17px">D</span></span></div>
<div class="c" style="left:894px;width:146px"><span class="t " style="left:5px;top:2px;"><span style="letter-spacing:-0.12px">2019-09-24 01</span><span style="letter-spacing:-0.62px">:00:39</span></span></div>
<div class="c" style="left:1040px;width:146px"><span class="t " style="left:5px;top:2px;"><span style="letter-spacing:-0.12px">2021-01-11 22</span><span style="letter-spacing:-0.62px">:51:39</span></span></div>
<div class="c" style="left:1186px;width:175px"><span class="t " style="right:6px;top:2px;"><span style="letter-spacing:-0.12px">2017-09-19 15</span><span style="letter-spacing:-0.62px">:40:39</span></span></div>
</div>
<div class="rn" style="top:128px"><span class="t " style="left:4.5px;top:2px;"><span style="letter-spacing:-0.34px">5</span></span></div>
<div class="row o" style="top:128px">
<div class="c" style="left:0px;width:300px"><span class="t " style="left:5px;top:2px;"><span style="letter-spacing:0.66px">gid</span><span style="letter-spacing:-1.17px">:</span><span style="letter-spacing:1.83px">//</span><span style="letter-spacing:-0.92px">sh</span><span style="letter-spacing:0.46px">opify</span><span style="letter-spacing:1.83px">/</span><span style="letter-spacing:-1.25px">Fu</span><span style="letter-spacing:0.52px">lfillme</span><span style="letter-spacing:0.13px">ntOrder/31</span><span style="letter-spacing:-0.34px">576709531</span></span></div>
<div class="c" style="left:300px;width:96px"><span class="t " style="left:5px;top:2px;"><span style="letter-spacing:-1.57px">CLOSE</span><span style="letter-spacing:0.17px">D</span></span></div>
<div class="c" style="left:396px;width:107px"><span class="t nul" style="right:5px;top:2px;"><span style="letter-spacing:0.06px">[NU</span><span style="letter-spacing:-1.34px">LL</span><span style="letter-spacing:0.83px">]</span></span></div>
<div class="c" style="left:503px;width:108px"><span class="t nul" style="right:5px;top:2px;"><span style="letter-spacing:0.06px">[NU</span><span style="letter-spacing:-1.34px">LL</span><span style="letter-spacing:0.83px">]</span></span></div>
<div class="c" style="left:611px;width:134px"><span class="t " style="left:5px;top:2px;"><span style="letter-spacing:-0.14px">#1008</span></span></div>
<div class="c" style="left:745px;width:149px"><span class="t " style="left:5px;top:2px;"><span style="letter-spacing:-0.72px">UNSUBMITT</span><span style="letter-spacing:-2.01px">E</span><span style="letter-spacing:0.17px">D</span></span></div>
<div class="c" style="left:894px;width:146px"><span class="t " style="left:5px;top:2px;"><span style="letter-spacing:-0.12px">2019-09-24 01</span><span style="letter-spacing:-0.62px">:00:39</span></span></div>
<div class="c" style="left:1040px;width:146px"><span class="t " style="left:5px;top:2px;"><span style="letter-spacing:-0.12px">2023-06-27 15</span><span style="letter-spacing:-0.62px">:29:21</span></span></div>
<div class="c" style="left:1186px;width:175px"><span class="t " style="right:6px;top:2px;"><span style="letter-spacing:-0.12px">2017-09-19 15</span><span style="letter-spacing:-0.62px">:40:39</span></span></div>
</div>
<div class="rn" style="top:152px"><span class="t " style="left:4.5px;top:2px;"><span style="letter-spacing:-0.34px">6</span></span></div>
<div class="row" style="top:152px">
<div class="c" style="left:0px;width:300px"><span class="t " style="left:5px;top:2px;"><span style="letter-spacing:0.66px">gid</span><span style="letter-spacing:-1.17px">:</span><span style="letter-spacing:1.83px">//</span><span style="letter-spacing:-0.92px">sh</span><span style="letter-spacing:0.46px">opify</span><span style="letter-spacing:1.83px">/</span><span style="letter-spacing:-1.25px">Fu</span><span style="letter-spacing:0.52px">lfillme</span><span style="letter-spacing:0.13px">ntOrder/31</span><span style="letter-spacing:-0.34px">576716085</span></span></div>
<div class="c" style="left:300px;width:96px"><span class="t " style="left:5px;top:2px;"><span style="letter-spacing:-1.57px">CLOSE</span><span style="letter-spacing:0.17px">D</span></span></div>
<div class="c" style="left:396px;width:107px"><span class="t nul" style="right:5px;top:2px;"><span style="letter-spacing:0.06px">[NU</span><span style="letter-spacing:-1.34px">LL</span><span style="letter-spacing:0.83px">]</span></span></div>
<div class="c" style="left:503px;width:108px"><span class="t nul" style="right:5px;top:2px;"><span style="letter-spacing:0.06px">[NU</span><span style="letter-spacing:-1.34px">LL</span><span style="letter-spacing:0.83px">]</span></span></div>
<div class="c" style="left:611px;width:134px"><span class="t " style="left:5px;top:2px;"><span style="letter-spacing:-0.14px">#1008</span></span></div>
<div class="c" style="left:745px;width:149px"><span class="t " style="left:5px;top:2px;"><span style="letter-spacing:-0.72px">UNSUBMITT</span><span style="letter-spacing:-2.01px">E</span><span style="letter-spacing:0.17px">D</span></span></div>
<div class="c" style="left:894px;width:146px"><span class="t " style="left:5px;top:2px;"><span style="letter-spacing:-0.12px">2019-09-24 01</span><span style="letter-spacing:-0.62px">:00:39</span></span></div>
<div class="c" style="left:1040px;width:146px"><span class="t " style="left:5px;top:2px;"><span style="letter-spacing:-0.12px">2023-02-09 20</span><span style="letter-spacing:-0.62px">:17:11</span></span></div>
<div class="c" style="left:1186px;width:175px"><span class="t " style="right:6px;top:2px;"><span style="letter-spacing:-0.12px">2017-09-19 15</span><span style="letter-spacing:-0.62px">:40:39</span></span></div>
</div>
<div class="rn" style="top:176px"><span class="t " style="left:4.5px;top:2px;"><span style="letter-spacing:-0.34px">7</span></span></div>
<div class="row o" style="top:176px">
<div class="c" style="left:0px;width:300px"><span class="t " style="left:5px;top:2px;"><span style="letter-spacing:0.66px">gid</span><span style="letter-spacing:-1.17px">:</span><span style="letter-spacing:1.83px">//</span><span style="letter-spacing:-0.92px">sh</span><span style="letter-spacing:0.46px">opify</span><span style="letter-spacing:1.83px">/</span><span style="letter-spacing:-1.25px">Fu</span><span style="letter-spacing:0.52px">lfillme</span><span style="letter-spacing:0.13px">ntOrder/31</span><span style="letter-spacing:-0.34px">577954715</span></span></div>
<div class="c" style="left:300px;width:96px"><span class="t " style="left:5px;top:2px;"><span style="letter-spacing:-1.57px">CLOSE</span><span style="letter-spacing:0.17px">D</span></span></div>
<div class="c" style="left:396px;width:107px"><span class="t nul" style="right:5px;top:2px;"><span style="letter-spacing:0.06px">[NU</span><span style="letter-spacing:-1.34px">LL</span><span style="letter-spacing:0.83px">]</span></span></div>
<div class="c" style="left:503px;width:108px"><span class="t nul" style="right:5px;top:2px;"><span style="letter-spacing:0.06px">[NU</span><span style="letter-spacing:-1.34px">LL</span><span style="letter-spacing:0.83px">]</span></span></div>
<div class="c" style="left:611px;width:134px"><span class="t " style="left:5px;top:2px;"><span style="letter-spacing:-0.14px">#1161</span></span></div>
<div class="c" style="left:745px;width:149px"><span class="t " style="left:5px;top:2px;"><span style="letter-spacing:-0.72px">UNSUBMITT</span><span style="letter-spacing:-2.01px">E</span><span style="letter-spacing:0.17px">D</span></span></div>
<div class="c" style="left:894px;width:146px"><span class="t " style="left:5px;top:2px;"><span style="letter-spacing:-0.12px">2019-09-24 01</span><span style="letter-spacing:-0.62px">:00:50</span></span></div>
<div class="c" style="left:1040px;width:146px"><span class="t " style="left:5px;top:2px;"><span style="letter-spacing:-0.12px">2023-04-18 11</span><span style="letter-spacing:-0.62px">:18:02</span></span></div>
<div class="c" style="left:1186px;width:175px"><span class="t " style="right:6px;top:2px;"><span style="letter-spacing:-0.12px">2019-07-16 20</span><span style="letter-spacing:-0.62px">:52:05</span></span></div>
</div>
<div class="rn" style="top:200px"><span class="t " style="left:4.5px;top:2px;"><span style="letter-spacing:-0.34px">8</span></span></div>
<div class="row" style="top:200px">
<div class="c" style="left:0px;width:300px"><span class="t " style="left:5px;top:2px;"><span style="letter-spacing:0.66px">gid</span><span style="letter-spacing:-1.17px">:</span><span style="letter-spacing:1.83px">//</span><span style="letter-spacing:-0.92px">sh</span><span style="letter-spacing:0.46px">opify</span><span style="letter-spacing:1.83px">/</span><span style="letter-spacing:-1.25px">Fu</span><span style="letter-spacing:0.52px">lfillme</span><span style="letter-spacing:0.13px">ntOrder/31</span><span style="letter-spacing:-0.34px">577967823</span></span></div>
<div class="c" style="left:300px;width:96px"><span class="t " style="left:5px;top:2px;"><span style="letter-spacing:-1.57px">CLOSE</span><span style="letter-spacing:0.17px">D</span></span></div>
<div class="c" style="left:396px;width:107px"><span class="t nul" style="right:5px;top:2px;"><span style="letter-spacing:0.06px">[NU</span><span style="letter-spacing:-1.34px">LL</span><span style="letter-spacing:0.83px">]</span></span></div>
<div class="c" style="left:503px;width:108px"><span class="t nul" style="right:5px;top:2px;"><span style="letter-spacing:0.06px">[NU</span><span style="letter-spacing:-1.34px">LL</span><span style="letter-spacing:0.83px">]</span></span></div>
<div class="c" style="left:611px;width:134px"><span class="t " style="left:5px;top:2px;"><span style="letter-spacing:-0.14px">#1162</span></span></div>
<div class="c" style="left:745px;width:149px"><span class="t " style="left:5px;top:2px;"><span style="letter-spacing:-0.72px">UNSUBMITT</span><span style="letter-spacing:-2.01px">E</span><span style="letter-spacing:0.17px">D</span></span></div>
<div class="c" style="left:894px;width:146px"><span class="t " style="left:5px;top:2px;"><span style="letter-spacing:-0.12px">2019-09-24 01</span><span style="letter-spacing:-0.62px">:00:50</span></span></div>
<div class="c" style="left:1040px;width:146px"><span class="t " style="left:5px;top:2px;"><span style="letter-spacing:-0.12px">2023-04-18 15</span><span style="letter-spacing:-0.62px">:09:12</span></span></div>
<div class="c" style="left:1186px;width:175px"><span class="t " style="right:6px;top:2px;"><span style="letter-spacing:-0.12px">2019-07-25 15</span><span style="letter-spacing:-0.62px">:48:02</span></span></div>
</div>
<div class="rn" style="top:224px"><span class="t " style="left:4.5px;top:2px;"><span style="letter-spacing:-0.34px">9</span></span></div>
<div class="row o" style="top:224px">
<div class="c" style="left:0px;width:300px"><span class="t " style="left:5px;top:2px;"><span style="letter-spacing:0.66px">gid</span><span style="letter-spacing:-1.17px">:</span><span style="letter-spacing:1.83px">//</span><span style="letter-spacing:-0.92px">sh</span><span style="letter-spacing:0.46px">opify</span><span style="letter-spacing:1.83px">/</span><span style="letter-spacing:-1.25px">Fu</span><span style="letter-spacing:0.52px">lfillme</span><span style="letter-spacing:0.13px">ntOrder/31</span><span style="letter-spacing:-0.34px">577974376</span></span></div>
<div class="c" style="left:300px;width:96px"><span class="t " style="left:5px;top:2px;"><span style="letter-spacing:-1.57px">CLOSE</span><span style="letter-spacing:0.17px">D</span></span></div>
<div class="c" style="left:396px;width:107px"><span class="t nul" style="right:5px;top:2px;"><span style="letter-spacing:0.06px">[NU</span><span style="letter-spacing:-1.34px">LL</span><span style="letter-spacing:0.83px">]</span></span></div>
<div class="c" style="left:503px;width:108px"><span class="t nul" style="right:5px;top:2px;"><span style="letter-spacing:0.06px">[NU</span><span style="letter-spacing:-1.34px">LL</span><span style="letter-spacing:0.83px">]</span></span></div>
<div class="c" style="left:611px;width:134px"><span class="t " style="left:5px;top:2px;"><span style="letter-spacing:-0.14px">#1163</span></span></div>
<div class="c" style="left:745px;width:149px"><span class="t " style="left:5px;top:2px;"><span style="letter-spacing:-0.72px">UNSUBMITT</span><span style="letter-spacing:-2.01px">E</span><span style="letter-spacing:0.17px">D</span></span></div>
<div class="c" style="left:894px;width:146px"><span class="t " style="left:5px;top:2px;"><span style="letter-spacing:-0.12px">2019-09-24 01</span><span style="letter-spacing:-0.62px">:00:50</span></span></div>
<div class="c" style="left:1040px;width:146px"><span class="t " style="left:5px;top:2px;"><span style="letter-spacing:-0.12px">2023-06-21 01</span><span style="letter-spacing:-0.62px">:19:16</span></span></div>
<div class="c" style="left:1186px;width:175px"><span class="t " style="right:6px;top:2px;"><span style="letter-spacing:-0.12px">2019-07-25 15</span><span style="letter-spacing:-0.62px">:50:45</span></span></div>
</div>
<div class="rn" style="top:248px"><span class="t " style="left:4.5px;top:2px;"><span style="letter-spacing:-0.34px">10</span></span></div>
<div class="row" style="top:248px">
<div class="c" style="left:0px;width:300px"><span class="t " style="left:5px;top:2px;"><span style="letter-spacing:0.66px">gid</span><span style="letter-spacing:-1.17px">:</span><span style="letter-spacing:1.83px">//</span><span style="letter-spacing:-0.92px">sh</span><span style="letter-spacing:0.46px">opify</span><span style="letter-spacing:1.83px">/</span><span style="letter-spacing:-1.25px">Fu</span><span style="letter-spacing:0.52px">lfillme</span><span style="letter-spacing:0.13px">ntOrder/31</span><span style="letter-spacing:-0.34px">577977653</span></span></div>
<div class="c" style="left:300px;width:96px"><span class="t " style="left:5px;top:2px;"><span style="letter-spacing:-1.57px">CLOSE</span><span style="letter-spacing:0.17px">D</span></span></div>
<div class="c" style="left:396px;width:107px"><span class="t nul" style="right:5px;top:2px;"><span style="letter-spacing:0.06px">[NU</span><span style="letter-spacing:-1.34px">LL</span><span style="letter-spacing:0.83px">]</span></span></div>
<div class="c" style="left:503px;width:108px"><span class="t nul" style="right:5px;top:2px;"><span style="letter-spacing:0.06px">[NU</span><span style="letter-spacing:-1.34px">LL</span><span style="letter-spacing:0.83px">]</span></span></div>
<div class="c" style="left:611px;width:134px"><span class="t " style="left:5px;top:2px;"><span style="letter-spacing:-0.14px">#1164</span></span></div>
<div class="c" style="left:745px;width:149px"><span class="t " style="left:5px;top:2px;"><span style="letter-spacing:-0.72px">UNSUBMITT</span><span style="letter-spacing:-2.01px">E</span><span style="letter-spacing:0.17px">D</span></span></div>
<div class="c" style="left:894px;width:146px"><span class="t " style="left:5px;top:2px;"><span style="letter-spacing:-0.12px">2019-09-24 01</span><span style="letter-spacing:-0.62px">:00:50</span></span></div>
<div class="c" style="left:1040px;width:146px"><span class="t " style="left:5px;top:2px;"><span style="letter-spacing:-0.12px">2023-04-11 21</span><span style="letter-spacing:-0.62px">:31:49</span></span></div>
<div class="c" style="left:1186px;width:175px"><span class="t " style="right:6px;top:2px;"><span style="letter-spacing:-0.12px">2019-07-25 15</span><span style="letter-spacing:-0.62px">:56:42</span></span></div>
</div>
<div class="rn" style="top:272px"><span class="t " style="left:4.5px;top:2px;"><span style="letter-spacing:-0.34px">11</span></span></div>
<div class="row o" style="top:272px">
<div class="c" style="left:0px;width:300px"><span class="t " style="left:5px;top:2px;"><span style="letter-spacing:0.66px">gid</span><span style="letter-spacing:-1.17px">:</span><span style="letter-spacing:1.83px">//</span><span style="letter-spacing:-0.92px">sh</span><span style="letter-spacing:0.46px">opify</span><span style="letter-spacing:1.83px">/</span><span style="letter-spacing:-1.25px">Fu</span><span style="letter-spacing:0.52px">lfillme</span><span style="letter-spacing:0.13px">ntOrder/31</span><span style="letter-spacing:-0.34px">577987483</span></span></div>
<div class="c" style="left:300px;width:96px"><span class="t " style="left:5px;top:2px;"><span style="letter-spacing:-1.57px">CLOSE</span><span style="letter-spacing:0.17px">D</span></span></div>
<div class="c" style="left:396px;width:107px"><span class="t nul" style="right:5px;top:2px;"><span style="letter-spacing:0.06px">[NU</span><span style="letter-spacing:-1.34px">LL</span><span style="letter-spacing:0.83px">]</span></span></div>
<div class="c" style="left:503px;width:108px"><span class="t nul" style="right:5px;top:2px;"><span style="letter-spacing:0.06px">[NU</span><span style="letter-spacing:-1.34px">LL</span><span style="letter-spacing:0.83px">]</span></span></div>
<div class="c" style="left:611px;width:134px"><span class="t " style="left:5px;top:2px;"><span style="letter-spacing:-0.14px">#1165</span></span></div>
<div class="c" style="left:745px;width:149px"><span class="t " style="left:5px;top:2px;"><span style="letter-spacing:-0.72px">UNSUBMITT</span><span style="letter-spacing:-2.01px">E</span><span style="letter-spacing:0.17px">D</span></span></div>
<div class="c" style="left:894px;width:146px"><span class="t " style="left:5px;top:2px;"><span style="letter-spacing:-0.12px">2019-09-24 01</span><span style="letter-spacing:-0.62px">:00:50</span></span></div>
<div class="c" style="left:1040px;width:146px"><span class="t " style="left:5px;top:2px;"><span style="letter-spacing:-0.12px">2023-07-27 17</span><span style="letter-spacing:-0.62px">:48:32</span></span></div>
<div class="c" style="left:1186px;width:175px"><span class="t " style="right:6px;top:2px;"><span style="letter-spacing:-0.12px">2019-07-25 15</span><span style="letter-spacing:-0.62px">:57:56</span></span></div>
</div>
<div class="rn" style="top:296px"><span class="t " style="left:4.5px;top:2px;"><span style="letter-spacing:-0.34px">12</span></span></div>
<div class="row" style="top:296px">
<div class="c" style="left:0px;width:300px"><span class="t " style="left:5px;top:2px;"><span style="letter-spacing:0.66px">gid</span><span style="letter-spacing:-1.17px">:</span><span style="letter-spacing:1.83px">//</span><span style="letter-spacing:-0.92px">sh</span><span style="letter-spacing:0.46px">opify</span><span style="letter-spacing:1.83px">/</span><span style="letter-spacing:-1.25px">Fu</span><span style="letter-spacing:0.52px">lfillme</span><span style="letter-spacing:0.13px">ntOrder/31</span><span style="letter-spacing:-0.34px">577990760</span></span></div>
<div class="c" style="left:300px;width:96px"><span class="t " style="left:5px;top:2px;"><span style="letter-spacing:-1.57px">CLOSE</span><span style="letter-spacing:0.17px">D</span></span></div>
<div class="c" style="left:396px;width:107px"><span class="t nul" style="right:5px;top:2px;"><span style="letter-spacing:0.06px">[NU</span><span style="letter-spacing:-1.34px">LL</span><span style="letter-spacing:0.83px">]</span></span></div>
<div class="c" style="left:503px;width:108px"><span class="t nul" style="right:5px;top:2px;"><span style="letter-spacing:0.06px">[NU</span><span style="letter-spacing:-1.34px">LL</span><span style="letter-spacing:0.83px">]</span></span></div>
<div class="c" style="left:611px;width:134px"><span class="t " style="left:5px;top:2px;"><span style="letter-spacing:-0.14px">#1166</span></span></div>
<div class="c" style="left:745px;width:149px"><span class="t " style="left:5px;top:2px;"><span style="letter-spacing:-0.72px">UNSUBMITT</span><span style="letter-spacing:-2.01px">E</span><span style="letter-spacing:0.17px">D</span></span></div>
<div class="c" style="left:894px;width:146px"><span class="t " style="left:5px;top:2px;"><span style="letter-spacing:-0.12px">2019-09-24 01</span><span style="letter-spacing:-0.62px">:00:50</span></span></div>
<div class="c" style="left:1040px;width:146px"><span class="t " style="left:5px;top:2px;"><span style="letter-spacing:-0.12px">2023-08-09 13</span><span style="letter-spacing:-0.62px">:08:34</span></span></div>
<div class="c" style="left:1186px;width:175px"><span class="t " style="right:6px;top:2px;"><span style="letter-spacing:-0.12px">2019-07-25 15</span><span style="letter-spacing:-0.62px">:58:08</span></span></div>
</div>
<div class="rn" style="top:320px"><span class="t " style="left:4.5px;top:2px;"><span style="letter-spacing:-0.34px">13</span></span></div>
<div class="row o" style="top:320px">
<div class="c" style="left:0px;width:300px"><span class="t " style="left:5px;top:2px;"><span style="letter-spacing:0.66px">gid</span><span style="letter-spacing:-1.17px">:</span><span style="letter-spacing:1.83px">//</span><span style="letter-spacing:-0.92px">sh</span><span style="letter-spacing:0.46px">opify</span><span style="letter-spacing:1.83px">/</span><span style="letter-spacing:-1.25px">Fu</span><span style="letter-spacing:0.52px">lfillme</span><span style="letter-spacing:0.13px">ntOrder/31</span><span style="letter-spacing:-0.34px">577994037</span></span></div>
<div class="c" style="left:300px;width:96px"><span class="t " style="left:5px;top:2px;"><span style="letter-spacing:-1.57px">CLOSE</span><span style="letter-spacing:0.17px">D</span></span></div>
<div class="c" style="left:396px;width:107px"><span class="t nul" style="right:5px;top:2px;"><span style="letter-spacing:0.06px">[NU</span><span style="letter-spacing:-1.34px">LL</span><span style="letter-spacing:0.83px">]</span></span></div>
<div class="c" style="left:503px;width:108px"><span class="t nul" style="right:5px;top:2px;"><span style="letter-spacing:0.06px">[NU</span><span style="letter-spacing:-1.34px">LL</span><span style="letter-spacing:0.83px">]</span></span></div>
<div class="c" style="left:611px;width:134px"><span class="t " style="left:5px;top:2px;"><span style="letter-spacing:-0.14px">#1167</span></span></div>
<div class="c" style="left:745px;width:149px"><span class="t " style="left:5px;top:2px;"><span style="letter-spacing:-0.72px">UNSUBMITT</span><span style="letter-spacing:-2.01px">E</span><span style="letter-spacing:0.17px">D</span></span></div>
<div class="c" style="left:894px;width:146px"><span class="t " style="left:5px;top:2px;"><span style="letter-spacing:-0.12px">2019-09-24 01</span><span style="letter-spacing:-0.62px">:00:50</span></span></div>
<div class="c" style="left:1040px;width:146px"><span class="t " style="left:5px;top:2px;"><span style="letter-spacing:-0.12px">2023-04-27 20</span><span style="letter-spacing:-0.62px">:38:33</span></span></div>
<div class="c" style="left:1186px;width:175px"><span class="t " style="right:6px;top:2px;"><span style="letter-spacing:-0.12px">2019-07-25 15</span><span style="letter-spacing:-0.62px">:59:20</span></span></div>
</div>
<div class="rn" style="top:344px"><span class="t " style="left:4.5px;top:2px;"><span style="letter-spacing:-0.34px">14</span></span></div>
<div class="row" style="top:344px">
<div class="c" style="left:0px;width:300px"><span class="t " style="left:5px;top:2px;"><span style="letter-spacing:0.66px">gid</span><span style="letter-spacing:-1.17px">:</span><span style="letter-spacing:1.83px">//</span><span style="letter-spacing:-0.92px">sh</span><span style="letter-spacing:0.46px">opify</span><span style="letter-spacing:1.83px">/</span><span style="letter-spacing:-1.25px">Fu</span><span style="letter-spacing:0.52px">lfillme</span><span style="letter-spacing:0.13px">ntOrder/31</span><span style="letter-spacing:-0.34px">578003867</span></span></div>
<div class="c" style="left:300px;width:96px"><span class="t " style="left:5px;top:2px;"><span style="letter-spacing:-1.57px">CLOSE</span><span style="letter-spacing:0.17px">D</span></span></div>
<div class="c" style="left:396px;width:107px"><span class="t nul" style="right:5px;top:2px;"><span style="letter-spacing:0.06px">[NU</span><span style="letter-spacing:-1.34px">LL</span><span style="letter-spacing:0.83px">]</span></span></div>
<div class="c" style="left:503px;width:108px"><span class="t nul" style="right:5px;top:2px;"><span style="letter-spacing:0.06px">[NU</span><span style="letter-spacing:-1.34px">LL</span><span style="letter-spacing:0.83px">]</span></span></div>
<div class="c" style="left:611px;width:134px"><span class="t " style="left:5px;top:2px;"><span style="letter-spacing:-0.14px">#1168</span></span></div>
<div class="c" style="left:745px;width:149px"><span class="t " style="left:5px;top:2px;"><span style="letter-spacing:-0.72px">UNSUBMITT</span><span style="letter-spacing:-2.01px">E</span><span style="letter-spacing:0.17px">D</span></span></div>
<div class="c" style="left:894px;width:146px"><span class="t " style="left:5px;top:2px;"><span style="letter-spacing:-0.12px">2019-09-24 01</span><span style="letter-spacing:-0.62px">:00:50</span></span></div>
<div class="c" style="left:1040px;width:146px"><span class="t " style="left:5px;top:2px;"><span style="letter-spacing:-0.12px">2023-04-19 13</span><span style="letter-spacing:-0.62px">:53:52</span></span></div>
<div class="c" style="left:1186px;width:175px"><span class="t " style="right:6px;top:2px;"><span style="letter-spacing:-0.12px">2019-07-25 17</span><span style="letter-spacing:-0.62px">:15:25</span></span></div>
</div>
<div class="rn" style="top:368px"><span class="t " style="left:4.5px;top:2px;"><span style="letter-spacing:-0.34px">15</span></span></div>
<div class="row o" style="top:368px">
<div class="c" style="left:0px;width:300px"><span class="t " style="left:5px;top:2px;"><span style="letter-spacing:0.66px">gid</span><span style="letter-spacing:-1.17px">:</span><span style="letter-spacing:1.83px">//</span><span style="letter-spacing:-0.92px">sh</span><span style="letter-spacing:0.46px">opify</span><span style="letter-spacing:1.83px">/</span><span style="letter-spacing:-1.25px">Fu</span><span style="letter-spacing:0.52px">lfillme</span><span style="letter-spacing:0.13px">ntOrder/31</span><span style="letter-spacing:-0.34px">578010421</span></span></div>
<div class="c" style="left:300px;width:96px"><span class="t " style="left:5px;top:2px;"><span style="letter-spacing:-1.57px">CLOSE</span><span style="letter-spacing:0.17px">D</span></span></div>
<div class="c" style="left:396px;width:107px"><span class="t nul" style="right:5px;top:2px;"><span style="letter-spacing:0.06px">[NU</span><span style="letter-spacing:-1.34px">LL</span><span style="letter-spacing:0.83px">]</span></span></div>
<div class="c" style="left:503px;width:108px"><span class="t nul" style="right:5px;top:2px;"><span style="letter-spacing:0.06px">[NU</span><span style="letter-spacing:-1.34px">LL</span><span style="letter-spacing:0.83px">]</span></span></div>
<div class="c" style="left:611px;width:134px"><span class="t " style="left:5px;top:2px;"><span style="letter-spacing:-0.14px">#1169</span></span></div>
<div class="c" style="left:745px;width:149px"><span class="t " style="left:5px;top:2px;"><span style="letter-spacing:-0.72px">UNSUBMITT</span><span style="letter-spacing:-2.01px">E</span><span style="letter-spacing:0.17px">D</span></span></div>
<div class="c" style="left:894px;width:146px"><span class="t " style="left:5px;top:2px;"><span style="letter-spacing:-0.12px">2019-09-24 01</span><span style="letter-spacing:-0.62px">:00:50</span></span></div>
<div class="c" style="left:1040px;width:146px"><span class="t " style="left:5px;top:2px;"><span style="letter-spacing:-0.12px">2023-02-09 19</span><span style="letter-spacing:-0.62px">:45:40</span></span></div>
<div class="c" style="left:1186px;width:175px"><span class="t " style="right:6px;top:2px;"><span style="letter-spacing:-0.12px">2019-07-25 17</span><span style="letter-spacing:-0.62px">:15:57</span></span></div>
</div>
<div class="rn" style="top:392px"><span class="t " style="left:4.5px;top:2px;"><span style="letter-spacing:-0.34px">16</span></span></div>
<div class="row" style="top:392px">
<div class="c" style="left:0px;width:300px"><span class="t " style="left:5px;top:2px;"><span style="letter-spacing:0.66px">gid</span><span style="letter-spacing:-1.17px">:</span><span style="letter-spacing:1.83px">//</span><span style="letter-spacing:-0.92px">sh</span><span style="letter-spacing:0.46px">opify</span><span style="letter-spacing:1.83px">/</span><span style="letter-spacing:-1.25px">Fu</span><span style="letter-spacing:0.52px">lfillme</span><span style="letter-spacing:0.13px">ntOrder/31</span><span style="letter-spacing:-0.34px">578016975</span></span></div>
<div class="c" style="left:300px;width:96px"><span class="t " style="left:5px;top:2px;"><span style="letter-spacing:-1.57px">CLOSE</span><span style="letter-spacing:0.17px">D</span></span></div>
<div class="c" style="left:396px;width:107px"><span class="t nul" style="right:5px;top:2px;"><span style="letter-spacing:0.06px">[NU</span><span style="letter-spacing:-1.34px">LL</span><span style="letter-spacing:0.83px">]</span></span></div>
<div class="c" style="left:503px;width:108px"><span class="t nul" style="right:5px;top:2px;"><span style="letter-spacing:0.06px">[NU</span><span style="letter-spacing:-1.34px">LL</span><span style="letter-spacing:0.83px">]</span></span></div>
<div class="c" style="left:611px;width:134px"><span class="t " style="left:5px;top:2px;"><span style="letter-spacing:-0.14px">#1170</span></span></div>
<div class="c" style="left:745px;width:149px"><span class="t " style="left:5px;top:2px;"><span style="letter-spacing:-0.72px">UNSUBMITT</span><span style="letter-spacing:-2.01px">E</span><span style="letter-spacing:0.17px">D</span></span></div>
<div class="c" style="left:894px;width:146px"><span class="t " style="left:5px;top:2px;"><span style="letter-spacing:-0.12px">2019-09-24 01</span><span style="letter-spacing:-0.62px">:00:50</span></span></div>
<div class="c" style="left:1040px;width:146px"><span class="t " style="left:5px;top:2px;"><span style="letter-spacing:-0.12px">2023-06-27 19</span><span style="letter-spacing:-0.62px">:29:41</span></span></div>
<div class="c" style="left:1186px;width:175px"><span class="t " style="right:6px;top:2px;"><span style="letter-spacing:-0.12px">2019-07-25 17</span><span style="letter-spacing:-0.62px">:21:09</span></span></div>
</div>
<div class="rn" style="top:416px"><span class="t " style="left:4.5px;top:2px;"><span style="letter-spacing:-0.34px">17</span></span></div>
<div class="row o" style="top:416px">
<div class="c" style="left:0px;width:300px"><span class="t " style="left:5px;top:2px;"><span style="letter-spacing:0.66px">gid</span><span style="letter-spacing:-1.17px">:</span><span style="letter-spacing:1.83px">//</span><span style="letter-spacing:-0.92px">sh</span><span style="letter-spacing:0.46px">opify</span><span style="letter-spacing:1.83px">/</span><span style="letter-spacing:-1.25px">Fu</span><span style="letter-spacing:0.52px">lfillme</span><span style="letter-spacing:0.13px">ntOrder/31</span><span style="letter-spacing:-0.34px">578020251</span></span></div>
<div class="c" style="left:300px;width:96px"><span class="t " style="left:5px;top:2px;"><span style="letter-spacing:-1.57px">CLOSE</span><span style="letter-spacing:0.17px">D</span></span></div>
<div class="c" style="left:396px;width:107px"><span class="t nul" style="right:5px;top:2px;"><span style="letter-spacing:0.06px">[NU</span><span style="letter-spacing:-1.34px">LL</span><span style="letter-spacing:0.83px">]</span></span></div>
<div class="c" style="left:503px;width:108px"><span class="t nul" style="right:5px;top:2px;"><span style="letter-spacing:0.06px">[NU</span><span style="letter-spacing:-1.34px">LL</span><span style="letter-spacing:0.83px">]</span></span></div>
<div class="c" style="left:611px;width:134px"><span class="t " style="left:5px;top:2px;"><span style="letter-spacing:-0.14px">#1172</span></span></div>
<div class="c" style="left:745px;width:149px"><span class="t " style="left:5px;top:2px;"><span style="letter-spacing:-0.72px">UNSUBMITT</span><span style="letter-spacing:-2.01px">E</span><span style="letter-spacing:0.17px">D</span></span></div>
<div class="c" style="left:894px;width:146px"><span class="t " style="left:5px;top:2px;"><span style="letter-spacing:-0.12px">2019-09-24 01</span><span style="letter-spacing:-0.62px">:00:50</span></span></div>
<div class="c" style="left:1040px;width:146px"><span class="t " style="left:5px;top:2px;"><span style="letter-spacing:-0.12px">2023-04-27 21</span><span style="letter-spacing:-0.62px">:43:14</span></span></div>
<div class="c" style="left:1186px;width:175px"><span class="t " style="right:6px;top:2px;"><span style="letter-spacing:-0.12px">2019-09-04 19</span><span style="letter-spacing:-0.62px">:10:25</span></span></div>
</div>
<div class="rn" style="top:440px"><span class="t " style="left:4.5px;top:2px;"><span style="letter-spacing:-0.34px">18</span></span></div>
<div class="row" style="top:440px">
<div class="c" style="left:0px;width:300px"><span class="t " style="left:5px;top:2px;"><span style="letter-spacing:0.66px">gid</span><span style="letter-spacing:-1.17px">:</span><span style="letter-spacing:1.83px">//</span><span style="letter-spacing:-0.92px">sh</span><span style="letter-spacing:0.46px">opify</span><span style="letter-spacing:1.83px">/</span><span style="letter-spacing:-1.25px">Fu</span><span style="letter-spacing:0.52px">lfillme</span><span style="letter-spacing:0.13px">ntOrder/31</span><span style="letter-spacing:-0.34px">578026805</span></span></div>
<div class="c" style="left:300px;width:96px"><span class="t " style="left:5px;top:2px;"><span style="letter-spacing:-1.57px">CLOSE</span><span style="letter-spacing:0.17px">D</span></span></div>
<div class="c" style="left:396px;width:107px"><span class="t nul" style="right:5px;top:2px;"><span style="letter-spacing:0.06px">[NU</span><span style="letter-spacing:-1.34px">LL</span><span style="letter-spacing:0.83px">]</span></span></div>
<div class="c" style="left:503px;width:108px"><span class="t nul" style="right:5px;top:2px;"><span style="letter-spacing:0.06px">[NU</span><span style="letter-spacing:-1.34px">LL</span><span style="letter-spacing:0.83px">]</span></span></div>
<div class="c" style="left:611px;width:134px"><span class="t " style="left:5px;top:2px;"><span style="letter-spacing:-0.14px">#1173</span></span></div>
<div class="c" style="left:745px;width:149px"><span class="t " style="left:5px;top:2px;"><span style="letter-spacing:-0.72px">UNSUBMITT</span><span style="letter-spacing:-2.01px">E</span><span style="letter-spacing:0.17px">D</span></span></div>
<div class="c" style="left:894px;width:146px"><span class="t " style="left:5px;top:2px;"><span style="letter-spacing:-0.12px">2019-09-24 01</span><span style="letter-spacing:-0.62px">:00:51</span></span></div>
<div class="c" style="left:1040px;width:146px"><span class="t " style="left:5px;top:2px;"><span style="letter-spacing:-0.12px">2023-08-30 18</span><span style="letter-spacing:-0.62px">:44:24</span></span></div>
<div class="c" style="left:1186px;width:175px"><span class="t " style="right:6px;top:2px;"><span style="letter-spacing:-0.12px">2019-09-04 19</span><span style="letter-spacing:-0.62px">:13:45</span></span></div>
</div>
<div class="rn" style="top:464px"><span class="t " style="left:4.5px;top:2px;"><span style="letter-spacing:-0.34px">19</span></span></div>
<div class="row o" style="top:464px">
<div class="c" style="left:0px;width:300px"><span class="t " style="left:5px;top:2px;"><span style="letter-spacing:0.66px">gid</span><span style="letter-spacing:-1.17px">:</span><span style="letter-spacing:1.83px">//</span><span style="letter-spacing:-0.92px">sh</span><span style="letter-spacing:0.46px">opify</span><span style="letter-spacing:1.83px">/</span><span style="letter-spacing:-1.25px">Fu</span><span style="letter-spacing:0.52px">lfillme</span><span style="letter-spacing:0.13px">ntOrder/72</span><span style="letter-spacing:-0.34px">598765570</span></span></div>
<div class="c" style="left:300px;width:96px"><span class="t " style="left:5px;top:2px;"><span style="letter-spacing:-1.57px">CLOSE</span><span style="letter-spacing:0.17px">D</span></span></div>
<div class="c" style="left:396px;width:107px"><span class="t nul" style="right:5px;top:2px;"><span style="letter-spacing:0.06px">[NU</span><span style="letter-spacing:-1.34px">LL</span><span style="letter-spacing:0.83px">]</span></span></div>
<div class="c" style="left:503px;width:108px"><span class="t nul" style="right:5px;top:2px;"><span style="letter-spacing:0.06px">[NU</span><span style="letter-spacing:-1.34px">LL</span><span style="letter-spacing:0.83px">]</span></span></div>
<div class="c" style="left:611px;width:134px"><span class="t " style="left:5px;top:2px;"><span style="letter-spacing:-0.14px">#1174</span></span></div>
<div class="c" style="left:745px;width:149px"><span class="t " style="left:5px;top:2px;"><span style="letter-spacing:-0.72px">UNSUBMITT</span><span style="letter-spacing:-2.01px">E</span><span style="letter-spacing:0.17px">D</span></span></div>
<div class="c" style="left:894px;width:146px"><span class="t " style="left:5px;top:2px;"><span style="letter-spacing:-0.12px">2019-10-25 17</span><span style="letter-spacing:-0.62px">:49:37</span></span></div>
<div class="c" style="left:1040px;width:146px"><span class="t " style="left:5px;top:2px;"><span style="letter-spacing:-0.12px">2023-11-06 22</span><span style="letter-spacing:-0.62px">:04:19</span></span></div>
<div class="c" style="left:1186px;width:175px"><span class="t " style="right:6px;top:2px;"><span style="letter-spacing:-0.12px">2019-10-25 17</span><span style="letter-spacing:-0.62px">:49:36</span></span></div>
</div>
<div class="rn" style="top:488px"><span class="t " style="left:4.5px;top:2px;"><span style="letter-spacing:-0.34px">20</span></span></div>
<div class="row" style="top:488px">
<div class="c" style="left:0px;width:300px"><span class="t " style="left:5px;top:2px;"><span style="letter-spacing:0.66px">gid</span><span style="letter-spacing:-1.17px">:</span><span style="letter-spacing:1.83px">//</span><span style="letter-spacing:-0.92px">sh</span><span style="letter-spacing:0.46px">opify</span><span style="letter-spacing:1.83px">/</span><span style="letter-spacing:-1.25px">Fu</span><span style="letter-spacing:0.52px">lfillme</span><span style="letter-spacing:0.13px">ntOrder/72</span><span style="letter-spacing:-0.34px">600358095</span></span></div>
<div class="c" style="left:300px;width:96px"><span class="t " style="left:5px;top:2px;"><span style="letter-spacing:-1.57px">CLOSE</span><span style="letter-spacing:0.17px">D</span></span></div>
<div class="c" style="left:396px;width:107px"><span class="t nul" style="right:5px;top:2px;"><span style="letter-spacing:0.06px">[NU</span><span style="letter-spacing:-1.34px">LL</span><span style="letter-spacing:0.83px">]</span></span></div>
<div class="c" style="left:503px;width:108px"><span class="t nul" style="right:5px;top:2px;"><span style="letter-spacing:0.06px">[NU</span><span style="letter-spacing:-1.34px">LL</span><span style="letter-spacing:0.83px">]</span></span></div>
<div class="c" style="left:611px;width:134px"><span class="t " style="left:5px;top:2px;"><span style="letter-spacing:-0.14px">#1175</span></span></div>
<div class="c" style="left:745px;width:149px"><span class="t " style="left:5px;top:2px;"><span style="letter-spacing:-0.72px">UNSUBMITT</span><span style="letter-spacing:-2.01px">E</span><span style="letter-spacing:0.17px">D</span></span></div>
<div class="c" style="left:894px;width:146px"><span class="t " style="left:5px;top:2px;"><span style="letter-spacing:-0.12px">2019-10-25 18</span><span style="letter-spacing:-0.62px">:12:41</span></span></div>
<div class="c" style="left:1040px;width:146px"><span class="t " style="left:5px;top:2px;"><span style="letter-spacing:-0.12px">2023-08-25 16</span><span style="letter-spacing:-0.62px">:03:02</span></span></div>
<div class="c" style="left:1186px;width:175px"><span class="t " style="right:6px;top:2px;"><span style="letter-spacing:-0.12px">2019-10-25 18</span><span style="letter-spacing:-0.62px">:12:41</span></span></div>
</div>
<div class="rn" style="top:512px"><span class="t " style="left:4.5px;top:2px;"><span style="letter-spacing:-0.34px">21</span></span></div>
<div class="row o" style="top:512px">
<div class="c" style="left:0px;width:300px"><span class="t " style="left:5px;top:2px;"><span style="letter-spacing:0.66px">gid</span><span style="letter-spacing:-1.17px">:</span><span style="letter-spacing:1.83px">//</span><span style="letter-spacing:-0.92px">sh</span><span style="letter-spacing:0.46px">opify</span><span style="letter-spacing:1.83px">/</span><span style="letter-spacing:-1.25px">Fu</span><span style="letter-spacing:0.52px">lfillme</span><span style="letter-spacing:0.13px">ntOrder/72</span><span style="letter-spacing:-0.34px">600951195</span></span></div>
<div class="c" style="left:300px;width:96px"><span class="t " style="left:5px;top:2px;"><span style="letter-spacing:-1.57px">CLOSE</span><span style="letter-spacing:0.17px">D</span></span></div>
<div class="c" style="left:396px;width:107px"><span class="t nul" style="right:5px;top:2px;"><span style="letter-spacing:0.06px">[NU</span><span style="letter-spacing:-1.34px">LL</span><span style="letter-spacing:0.83px">]</span></span></div>
<div class="c" style="left:503px;width:108px"><span class="t nul" style="right:5px;top:2px;"><span style="letter-spacing:0.06px">[NU</span><span style="letter-spacing:-1.34px">LL</span><span style="letter-spacing:0.83px">]</span></span></div>
<div class="c" style="left:611px;width:134px"><span class="t " style="left:5px;top:2px;"><span style="letter-spacing:-0.14px">#1176</span></span></div>
<div class="c" style="left:745px;width:149px"><span class="t " style="left:5px;top:2px;"><span style="letter-spacing:-0.72px">UNSUBMITT</span><span style="letter-spacing:-2.01px">E</span><span style="letter-spacing:0.17px">D</span></span></div>
<div class="c" style="left:894px;width:146px"><span class="t " style="left:5px;top:2px;"><span style="letter-spacing:-0.12px">2019-10-25 18</span><span style="letter-spacing:-0.62px">:20:20</span></span></div>
<div class="c" style="left:1040px;width:146px"><span class="t " style="left:5px;top:2px;"><span style="letter-spacing:-0.12px">2023-07-26 20</span><span style="letter-spacing:-0.62px">:18:40</span></span></div>
<div class="c" style="left:1186px;width:175px"><span class="t " style="right:6px;top:2px;"><span style="letter-spacing:-0.12px">2019-10-25 18</span><span style="letter-spacing:-0.62px">:20:20</span></span></div>
</div>
<div class="rn" style="top:536px"><span class="t " style="left:4.5px;top:2px;"><span style="letter-spacing:-0.34px">22</span></span></div>
<div class="row" style="top:536px">
<div class="c" style="left:0px;width:300px"><span class="t " style="left:5px;top:2px;"><span style="letter-spacing:0.66px">gid</span><span style="letter-spacing:-1.17px">:</span><span style="letter-spacing:1.83px">//</span><span style="letter-spacing:-0.92px">sh</span><span style="letter-spacing:0.46px">opify</span><span style="letter-spacing:1.83px">/</span><span style="letter-spacing:-1.25px">Fu</span><span style="letter-spacing:0.52px">lfillme</span><span style="letter-spacing:0.13px">ntOrder/72</span><span style="letter-spacing:-0.34px">600997071</span></span></div>
<div class="c" style="left:300px;width:96px"><span class="t " style="left:5px;top:2px;"><span style="letter-spacing:-1.57px">CLOSE</span><span style="letter-spacing:0.17px">D</span></span></div>
<div class="c" style="left:396px;width:107px"><span class="t nul" style="right:5px;top:2px;"><span style="letter-spacing:0.06px">[NU</span><span style="letter-spacing:-1.34px">LL</span><span style="letter-spacing:0.83px">]</span></span></div>
<div class="c" style="left:503px;width:108px"><span class="t nul" style="right:5px;top:2px;"><span style="letter-spacing:0.06px">[NU</span><span style="letter-spacing:-1.34px">LL</span><span style="letter-spacing:0.83px">]</span></span></div>
<div class="c" style="left:611px;width:134px"><span class="t " style="left:5px;top:2px;"><span style="letter-spacing:-0.14px">#1177</span></span></div>
<div class="c" style="left:745px;width:149px"><span class="t " style="left:5px;top:2px;"><span style="letter-spacing:-0.72px">UNSUBMITT</span><span style="letter-spacing:-2.01px">E</span><span style="letter-spacing:0.17px">D</span></span></div>
<div class="c" style="left:894px;width:146px"><span class="t " style="left:5px;top:2px;"><span style="letter-spacing:-0.12px">2019-10-25 18</span><span style="letter-spacing:-0.62px">:20:32</span></span></div>
<div class="c" style="left:1040px;width:146px"><span class="t " style="left:5px;top:2px;"><span style="letter-spacing:-0.12px">2023-04-19 13</span><span style="letter-spacing:-0.62px">:17:01</span></span></div>
<div class="c" style="left:1186px;width:175px"><span class="t " style="right:6px;top:2px;"><span style="letter-spacing:-0.12px">2019-10-25 18</span><span style="letter-spacing:-0.62px">:20:31</span></span></div>
</div>
<div class="rn" style="top:560px"><span class="t " style="left:4.5px;top:2px;"><span style="letter-spacing:-0.34px">23</span></span></div>
<div class="row o" style="top:560px">
<div class="c" style="left:0px;width:300px"><span class="t " style="left:5px;top:2px;"><span style="letter-spacing:0.66px">gid</span><span style="letter-spacing:-1.17px">:</span><span style="letter-spacing:1.83px">//</span><span style="letter-spacing:-0.92px">sh</span><span style="letter-spacing:0.46px">opify</span><span style="letter-spacing:1.83px">/</span><span style="letter-spacing:-1.25px">Fu</span><span style="letter-spacing:0.52px">lfillme</span><span style="letter-spacing:0.13px">ntOrder/72</span><span style="letter-spacing:-0.34px">601062607</span></span></div>
<div class="c" style="left:300px;width:96px"><span class="t " style="left:5px;top:2px;"><span style="letter-spacing:-1.57px">CLOSE</span><span style="letter-spacing:0.17px">D</span></span></div>
<div class="c" style="left:396px;width:107px"><span class="t nul" style="right:5px;top:2px;"><span style="letter-spacing:0.06px">[NU</span><span style="letter-spacing:-1.34px">LL</span><span style="letter-spacing:0.83px">]</span></span></div>
<div class="c" style="left:503px;width:108px"><span class="t nul" style="right:5px;top:2px;"><span style="letter-spacing:0.06px">[NU</span><span style="letter-spacing:-1.34px">LL</span><span style="letter-spacing:0.83px">]</span></span></div>
<div class="c" style="left:611px;width:134px"><span class="t " style="left:5px;top:2px;"><span style="letter-spacing:-0.14px">#1178</span></span></div>
<div class="c" style="left:745px;width:149px"><span class="t " style="left:5px;top:2px;"><span style="letter-spacing:-0.72px">UNSUBMITT</span><span style="letter-spacing:-2.01px">E</span><span style="letter-spacing:0.17px">D</span></span></div>
<div class="c" style="left:894px;width:146px"><span class="t " style="left:5px;top:2px;"><span style="letter-spacing:-0.12px">2019-10-25 18</span><span style="letter-spacing:-0.62px">:21:07</span></span></div>
<div class="c" style="left:1040px;width:146px"><span class="t " style="left:5px;top:2px;"><span style="letter-spacing:-0.12px">2024-01-18 21</span><span style="letter-spacing:-0.62px">:59:39</span></span></div>
<div class="c" style="left:1186px;width:175px"><span class="t " style="right:6px;top:2px;"><span style="letter-spacing:-0.12px">2019-10-25 18</span><span style="letter-spacing:-0.62px">:21:06</span></span></div>
</div>
<div class="rn" style="top:584px"><span class="t " style="left:4.5px;top:2px;"><span style="letter-spacing:-0.34px">24</span></span></div>
<div class="row" style="top:584px">
<div class="c" style="left:0px;width:300px"><span class="t " style="left:5px;top:2px;"><span style="letter-spacing:0.66px">gid</span><span style="letter-spacing:-1.17px">:</span><span style="letter-spacing:1.83px">//</span><span style="letter-spacing:-0.92px">sh</span><span style="letter-spacing:0.46px">opify</span><span style="letter-spacing:1.83px">/</span><span style="letter-spacing:-1.25px">Fu</span><span style="letter-spacing:0.52px">lfillme</span><span style="letter-spacing:0.13px">ntOrder/72</span><span style="letter-spacing:-0.34px">601144527</span></span></div>
<div class="c" style="left:300px;width:96px"><span class="t " style="left:5px;top:2px;"><span style="letter-spacing:-1.57px">CLOSE</span><span style="letter-spacing:0.17px">D</span></span></div>
<div class="c" style="left:396px;width:107px"><span class="t nul" style="right:5px;top:2px;"><span style="letter-spacing:0.06px">[NU</span><span style="letter-spacing:-1.34px">LL</span><span style="letter-spacing:0.83px">]</span></span></div>
<div class="c" style="left:503px;width:108px"><span class="t nul" style="right:5px;top:2px;"><span style="letter-spacing:0.06px">[NU</span><span style="letter-spacing:-1.34px">LL</span><span style="letter-spacing:0.83px">]</span></span></div>
<div class="c" style="left:611px;width:134px"><span class="t " style="left:5px;top:2px;"><span style="letter-spacing:-0.14px">#1179</span></span></div>
<div class="c" style="left:745px;width:149px"><span class="t " style="left:5px;top:2px;"><span style="letter-spacing:-0.72px">UNSUBMITT</span><span style="letter-spacing:-2.01px">E</span><span style="letter-spacing:0.17px">D</span></span></div>
<div class="c" style="left:894px;width:146px"><span class="t " style="left:5px;top:2px;"><span style="letter-spacing:-0.12px">2019-10-25 18</span><span style="letter-spacing:-0.62px">:21:59</span></span></div>
<div class="c" style="left:1040px;width:146px"><span class="t " style="left:5px;top:2px;"><span style="letter-spacing:-0.12px">2024-01-22 16</span><span style="letter-spacing:-0.62px">:17:27</span></span></div>
<div class="c" style="left:1186px;width:175px"><span class="t " style="right:6px;top:2px;"><span style="letter-spacing:-0.12px">2019-10-25 18</span><span style="letter-spacing:-0.62px">:21:59</span></span></div>
</div>
<div class="rn" style="top:608px"><span class="t " style="left:4.5px;top:2px;"><span style="letter-spacing:-0.34px">25</span></span></div>
<div class="row o" style="top:608px">
<div class="c" style="left:0px;width:300px"><span class="t " style="left:5px;top:2px;"><span style="letter-spacing:0.66px">gid</span><span style="letter-spacing:-1.17px">:</span><span style="letter-spacing:1.83px">//</span><span style="letter-spacing:-0.92px">sh</span><span style="letter-spacing:0.46px">opify</span><span style="letter-spacing:1.83px">/</span><span style="letter-spacing:-1.25px">Fu</span><span style="letter-spacing:0.52px">lfillme</span><span style="letter-spacing:0.13px">ntOrder/79</span><span style="letter-spacing:-0.34px">300935682</span></span></div>
<div class="c" style="left:300px;width:96px"><span class="t " style="left:5px;top:2px;"><span style="letter-spacing:-1.57px">CLOSE</span><span style="letter-spacing:0.17px">D</span></span></div>
<div class="c" style="left:396px;width:107px"><span class="t nul" style="right:5px;top:2px;"><span style="letter-spacing:0.06px">[NU</span><span style="letter-spacing:-1.34px">LL</span><span style="letter-spacing:0.83px">]</span></span></div>
<div class="c" style="left:503px;width:108px"><span class="t nul" style="right:5px;top:2px;"><span style="letter-spacing:0.06px">[NU</span><span style="letter-spacing:-1.34px">LL</span><span style="letter-spacing:0.83px">]</span></span></div>
<div class="c" style="left:611px;width:134px"><span class="t " style="left:5px;top:2px;"><span style="letter-spacing:-0.14px">#1180</span></span></div>
<div class="c" style="left:745px;width:149px"><span class="t " style="left:5px;top:2px;"><span style="letter-spacing:-0.72px">UNSUBMITT</span><span style="letter-spacing:-2.01px">E</span><span style="letter-spacing:0.17px">D</span></span></div>
<div class="c" style="left:894px;width:146px"><span class="t " style="left:5px;top:2px;"><span style="letter-spacing:-0.12px">2019-12-10 20</span><span style="letter-spacing:-0.62px">:00:27</span></span></div>
<div class="c" style="left:1040px;width:146px"><span class="t " style="left:5px;top:2px;"><span style="letter-spacing:-0.12px">2021-01-12 00</span><span style="letter-spacing:-0.62px">:01:26</span></span></div>
<div class="c" style="left:1186px;width:175px"><span class="t " style="right:6px;top:2px;"><span style="letter-spacing:-0.12px">2019-12-10 20</span><span style="letter-spacing:-0.62px">:00:25</span></span></div>
</div>
<div class="rn" style="top:632px"><span class="t " style="left:4.5px;top:2px;"><span style="letter-spacing:-0.34px">26</span></span></div>
<div class="row" style="top:632px">
<div class="c" style="left:0px;width:300px"><span class="t " style="left:5px;top:2px;"><span style="letter-spacing:0.66px">gid</span><span style="letter-spacing:-1.17px">:</span><span style="letter-spacing:1.83px">//</span><span style="letter-spacing:-0.92px">sh</span><span style="letter-spacing:0.46px">opify</span><span style="letter-spacing:1.83px">/</span><span style="letter-spacing:-1.25px">Fu</span><span style="letter-spacing:0.52px">lfillme</span><span style="letter-spacing:0.13px">ntOrder/88</span><span style="letter-spacing:-0.34px">388396648</span></span></div>
<div class="c" style="left:300px;width:96px"><span class="t " style="left:5px;top:2px;"><span style="letter-spacing:-1.57px">CLOSE</span><span style="letter-spacing:0.17px">D</span></span></div>
<div class="c" style="left:396px;width:107px"><span class="t nul" style="right:5px;top:2px;"><span style="letter-spacing:0.06px">[NU</span><span style="letter-spacing:-1.34px">LL</span><span style="letter-spacing:0.83px">]</span></span></div>
<div class="c" style="left:503px;width:108px"><span class="t nul" style="right:5px;top:2px;"><span style="letter-spacing:0.06px">[NU</span><span style="letter-spacing:-1.34px">LL</span><span style="letter-spacing:0.83px">]</span></span></div>
<div class="c" style="left:611px;width:134px"><span class="t " style="left:5px;top:2px;"><span style="letter-spacing:-0.14px">#1006</span></span></div>
<div class="c" style="left:745px;width:149px"><span class="t " style="left:5px;top:2px;"><span style="letter-spacing:-0.72px">UNSUBMITT</span><span style="letter-spacing:-2.01px">E</span><span style="letter-spacing:0.17px">D</span></span></div>
<div class="c" style="left:894px;width:146px"><span class="t " style="left:5px;top:2px;"><span style="letter-spacing:-0.12px">2019-12-24 19</span><span style="letter-spacing:-0.62px">:54:50</span></span></div>
<div class="c" style="left:1040px;width:146px"><span class="t " style="left:5px;top:2px;"><span style="letter-spacing:-0.12px">2021-01-12 00</span><span style="letter-spacing:-0.62px">:08:45</span></span></div>
<div class="c" style="left:1186px;width:175px"><span class="t " style="right:6px;top:2px;"><span style="letter-spacing:-0.12px">2017-09-19 15</span><span style="letter-spacing:-0.62px">:40:39</span></span></div>
</div>
<div class="rn" style="top:656px"><span class="t " style="left:4.5px;top:2px;"><span style="letter-spacing:-0.34px">27</span></span></div>
<div class="row o" style="top:656px">
<div class="c" style="left:0px;width:300px"><span class="t " style="left:5px;top:2px;"><span style="letter-spacing:0.66px">gid</span><span style="letter-spacing:-1.17px">:</span><span style="letter-spacing:1.83px">//</span><span style="letter-spacing:-0.92px">sh</span><span style="letter-spacing:0.46px">opify</span><span style="letter-spacing:1.83px">/</span><span style="letter-spacing:-1.25px">Fu</span><span style="letter-spacing:0.52px">lfillme</span><span style="letter-spacing:0.13px">ntOrder/91</span><span style="letter-spacing:-0.34px">159933749</span></span></div>
<div class="c" style="left:300px;width:96px"><span class="t " style="left:5px;top:2px;"><span style="letter-spacing:-1.57px">CLOSE</span><span style="letter-spacing:0.17px">D</span></span></div>
<div class="c" style="left:396px;width:107px"><span class="t nul" style="right:5px;top:2px;"><span style="letter-spacing:0.06px">[NU</span><span style="letter-spacing:-1.34px">LL</span><span style="letter-spacing:0.83px">]</span></span></div>
<div class="c" style="left:503px;width:108px"><span class="t nul" style="right:5px;top:2px;"><span style="letter-spacing:0.06px">[NU</span><span style="letter-spacing:-1.34px">LL</span><span style="letter-spacing:0.83px">]</span></span></div>
<div class="c" style="left:611px;width:134px"><span class="t " style="left:5px;top:2px;"><span style="letter-spacing:-0.14px">#1181</span></span></div>
<div class="c" style="left:745px;width:149px"><span class="t " style="left:5px;top:2px;"><span style="letter-spacing:-0.72px">UNSUBMITT</span><span style="letter-spacing:-2.01px">E</span><span style="letter-spacing:0.17px">D</span></span></div>
<div class="c" style="left:894px;width:146px"><span class="t " style="left:5px;top:2px;"><span style="letter-spacing:-0.12px">2020-01-21 21</span><span style="letter-spacing:-0.62px">:26:17</span></span></div>
<div class="c" style="left:1040px;width:146px"><span class="t " style="left:5px;top:2px;"><span style="letter-spacing:-0.12px">2021-01-12 00</span><span style="letter-spacing:-0.62px">:20:10</span></span></div>
<div class="c" style="left:1186px;width:175px"><span class="t " style="right:6px;top:2px;"><span style="letter-spacing:-0.12px">2020-01-21 21</span><span style="letter-spacing:-0.62px">:26:16</span></span></div>
</div>
<div class="rn" style="top:680px"><span class="t " style="left:4.5px;top:2px;"><span style="letter-spacing:-0.34px">28</span></span></div>
<div class="row" style="top:680px">
<div class="c" style="left:0px;width:300px"><span class="t " style="left:5px;top:2px;"><span style="letter-spacing:0.66px">gid</span><span style="letter-spacing:-1.17px">:</span><span style="letter-spacing:1.83px">//</span><span style="letter-spacing:-0.92px">sh</span><span style="letter-spacing:0.46px">opify</span><span style="letter-spacing:1.83px">/</span><span style="letter-spacing:-1.25px">Fu</span><span style="letter-spacing:0.52px">lfillme</span><span style="letter-spacing:0.13px">ntOrder/91</span><span style="letter-spacing:-0.34px">160477698</span></span></div>
<div class="c" style="left:300px;width:96px"><span class="t " style="left:5px;top:2px;"><span style="letter-spacing:-1.57px">CLOSE</span><span style="letter-spacing:0.17px">D</span></span></div>
<div class="c" style="left:396px;width:107px"><span class="t nul" style="right:5px;top:2px;"><span style="letter-spacing:0.06px">[NU</span><span style="letter-spacing:-1.34px">LL</span><span style="letter-spacing:0.83px">]</span></span></div>
<div class="c" style="left:503px;width:108px"><span class="t nul" style="right:5px;top:2px;"><span style="letter-spacing:0.06px">[NU</span><span style="letter-spacing:-1.34px">LL</span><span style="letter-spacing:0.83px">]</span></span></div>
<div class="c" style="left:611px;width:134px"><span class="t " style="left:5px;top:2px;"><span style="letter-spacing:-0.14px">#1182</span></span></div>
<div class="c" style="left:745px;width:149px"><span class="t " style="left:5px;top:2px;"><span style="letter-spacing:-0.72px">UNSUBMITT</span><span style="letter-spacing:-2.01px">E</span><span style="letter-spacing:0.17px">D</span></span></div>
<div class="c" style="left:894px;width:146px"><span class="t " style="left:5px;top:2px;"><span style="letter-spacing:-0.12px">2020-01-21 21</span><span style="letter-spacing:-0.62px">:33:28</span></span></div>
<div class="c" style="left:1040px;width:146px"><span class="t " style="left:5px;top:2px;"><span style="letter-spacing:-0.12px">2021-01-12 00</span><span style="letter-spacing:-0.62px">:20:10</span></span></div>
<div class="c" style="left:1186px;width:175px"><span class="t " style="right:6px;top:2px;"><span style="letter-spacing:-0.12px">2020-01-21 21</span><span style="letter-spacing:-0.62px">:33:27</span></span></div>
</div>
<div class="rn" style="top:704px"><span class="t " style="left:4.5px;top:2px;"><span style="letter-spacing:-0.34px">29</span></span></div>
<div class="row o" style="top:704px">
<div class="c" style="left:0px;width:300px"><span class="t " style="left:5px;top:2px;"><span style="letter-spacing:0.66px">gid</span><span style="letter-spacing:-1.17px">:</span><span style="letter-spacing:1.83px">//</span><span style="letter-spacing:-0.92px">sh</span><span style="letter-spacing:0.46px">opify</span><span style="letter-spacing:1.83px">/</span><span style="letter-spacing:-1.25px">Fu</span><span style="letter-spacing:0.52px">lfillme</span><span style="letter-spacing:0.13px">ntOrder/96</span><span style="letter-spacing:-0.34px">846377781</span></span></div>
<div class="c" style="left:300px;width:96px"><span class="t " style="left:5px;top:2px;"><span style="letter-spacing:-1.57px">CLOSE</span><span style="letter-spacing:0.17px">D</span></span></div>
<div class="c" style="left:396px;width:107px"><span class="t nul" style="right:5px;top:2px;"><span style="letter-spacing:0.06px">[NU</span><span style="letter-spacing:-1.34px">LL</span><span style="letter-spacing:0.83px">]</span></span></div>
<div class="c" style="left:503px;width:108px"><span class="t nul" style="right:5px;top:2px;"><span style="letter-spacing:0.06px">[NU</span><span style="letter-spacing:-1.34px">LL</span><span style="letter-spacing:0.83px">]</span></span></div>
<div class="c" style="left:611px;width:134px"><span class="t " style="left:5px;top:2px;"><span style="letter-spacing:-0.14px">#1183</span></span></div>
<div class="c" style="left:745px;width:149px"><span class="t " style="left:5px;top:2px;"><span style="letter-spacing:-0.72px">UNSUBMITT</span><span style="letter-spacing:-2.01px">E</span><span style="letter-spacing:0.17px">D</span></span></div>
<div class="c" style="left:894px;width:146px"><span class="t " style="left:5px;top:2px;"><span style="letter-spacing:-0.12px">2020-03-16 23</span><span style="letter-spacing:-0.62px">:05:50</span></span></div>
<div class="c" style="left:1040px;width:146px"><span class="t " style="left:5px;top:2px;"><span style="letter-spacing:-0.12px">2023-04-19 11</span><span style="letter-spacing:-0.62px">:22:32</span></span></div>
<div class="c" style="left:1186px;width:175px"><span class="t " style="right:6px;top:2px;"><span style="letter-spacing:-0.12px">2020-03-16 23</span><span style="letter-spacing:-0.62px">:05:47</span></span></div>
</div>
<div class="rn" style="top:728px"><span class="t " style="left:4.5px;top:2px;"><span style="letter-spacing:-0.34px">30</span></span></div>
<div class="row" style="top:728px">
<div class="c" style="left:0px;width:300px"><span class="t " style="left:5px;top:2px;"><span style="letter-spacing:0.66px">gid</span><span style="letter-spacing:-1.17px">:</span><span style="letter-spacing:1.83px">//</span><span style="letter-spacing:-0.92px">sh</span><span style="letter-spacing:0.46px">opify</span><span style="letter-spacing:1.83px">/</span><span style="letter-spacing:-1.25px">Fu</span><span style="letter-spacing:0.52px">lfillme</span><span style="letter-spacing:0.13px">ntOrder/96</span><span style="letter-spacing:-0.34px">846413826</span></span></div>
<div class="c" style="left:300px;width:96px"><span class="t " style="left:5px;top:2px;"><span style="letter-spacing:-1.57px">CLOSE</span><span style="letter-spacing:0.17px">D</span></span></div>
<div class="c" style="left:396px;width:107px"><span class="t nul" style="right:5px;top:2px;"><span style="letter-spacing:0.06px">[NU</span><span style="letter-spacing:-1.34px">LL</span><span style="letter-spacing:0.83px">]</span></span></div>
<div class="c" style="left:503px;width:108px"><span class="t nul" style="right:5px;top:2px;"><span style="letter-spacing:0.06px">[NU</span><span style="letter-spacing:-1.34px">LL</span><span style="letter-spacing:0.83px">]</span></span></div>
<div class="c" style="left:611px;width:134px"><span class="t " style="left:5px;top:2px;"><span style="letter-spacing:-0.14px">#1184</span></span></div>
<div class="c" style="left:745px;width:149px"><span class="t " style="left:5px;top:2px;"><span style="letter-spacing:-0.72px">UNSUBMITT</span><span style="letter-spacing:-2.01px">E</span><span style="letter-spacing:0.17px">D</span></span></div>
<div class="c" style="left:894px;width:146px"><span class="t " style="left:5px;top:2px;"><span style="letter-spacing:-0.12px">2020-03-16 23</span><span style="letter-spacing:-0.62px">:06:08</span></span></div>
<div class="c" style="left:1040px;width:146px"><span class="t " style="left:5px;top:2px;"><span style="letter-spacing:-0.12px">2023-07-26 19</span><span style="letter-spacing:-0.62px">:10:47</span></span></div>
<div class="c" style="left:1186px;width:175px"><span class="t " style="right:6px;top:2px;"><span style="letter-spacing:-0.12px">2020-03-16 23</span><span style="letter-spacing:-0.62px">:06:07</span></span></div>
</div>
<div class="rn" style="top:752px"><span class="t " style="left:4.5px;top:2px;"><span style="letter-spacing:-0.34px">31</span></span></div>
<div class="row o" style="top:752px">
<div class="c" style="left:0px;width:300px"><span class="t " style="left:5px;top:2px;"><span style="letter-spacing:0.66px">gid</span><span style="letter-spacing:-1.17px">:</span><span style="letter-spacing:1.83px">//</span><span style="letter-spacing:-0.92px">sh</span><span style="letter-spacing:0.46px">opify</span><span style="letter-spacing:1.83px">/</span><span style="letter-spacing:-1.25px">Fu</span><span style="letter-spacing:0.52px">lfillme</span><span style="letter-spacing:0.13px">ntOrder/96</span><span style="letter-spacing:-0.34px">846430370</span></span></div>
<div class="c" style="left:300px;width:96px"><span class="t " style="left:5px;top:2px;"><span style="letter-spacing:-1.57px">CLOSE</span><span style="letter-spacing:0.17px">D</span></span></div>
<div class="c" style="left:396px;width:107px"><span class="t nul" style="right:5px;top:2px;"><span style="letter-spacing:0.06px">[NU</span><span style="letter-spacing:-1.34px">LL</span><span style="letter-spacing:0.83px">]</span></span></div>
<div class="c" style="left:503px;width:108px"><span class="t nul" style="right:5px;top:2px;"><span style="letter-spacing:0.06px">[NU</span><span style="letter-spacing:-1.34px">LL</span><span style="letter-spacing:0.83px">]</span></span></div>
<div class="c" style="left:611px;width:134px"><span class="t " style="left:5px;top:2px;"><span style="letter-spacing:-0.14px">#1185</span></span></div>
<div class="c" style="left:745px;width:149px"><span class="t " style="left:5px;top:2px;"><span style="letter-spacing:-0.72px">UNSUBMITT</span><span style="letter-spacing:-2.01px">E</span><span style="letter-spacing:0.17px">D</span></span></div>
<div class="c" style="left:894px;width:146px"><span class="t " style="left:5px;top:2px;"><span style="letter-spacing:-0.12px">2020-03-16 23</span><span style="letter-spacing:-0.62px">:06:12</span></span></div>
<div class="c" style="left:1040px;width:146px"><span class="t " style="left:5px;top:2px;"><span style="letter-spacing:-0.12px">2024-01-22 10</span><span style="letter-spacing:-0.62px">:25:21</span></span></div>
<div class="c" style="left:1186px;width:175px"><span class="t " style="right:6px;top:2px;"><span style="letter-spacing:-0.12px">2020-03-16 23</span><span style="letter-spacing:-0.62px">:06:09</span></span></div>
</div>
<div style="position:absolute;left:31px;top:0;width:2px;height:32px;background:#000"></div><div style="position:absolute;left:31px;top:32px;width:1px;height:729px;background:#000"></div>
</div>
<div style="left:1870px;top:185px;width:22px;height:760px;background:#f0f0f0"></div>
<div style="left:1878px;top:206px;width:6px;height:110px;background:#8b8b8b"></div>
<div style="left:473px;top:946px;width:1419px;height:21px;background:#f0f0f0"></div>
<div style="left:494px;top:954px;width:150px;height:6px;background:#8b8b8b"></div>
<div style="left:1892px;top:185px;width:26px;height:782px;background:#e7e7e7"></div>
<span class="t " style="left:1914px;top:209px;transform:rotate(90deg);transform-origin:0 0;"><span style="letter-spacing:-1.17px">Pa</span><span style="letter-spacing:-0.01px">nel</span><span style="letter-spacing:-1.50px">s</span></span>
<svg class="i" style="left:1899px;top:192px" width="16" height="16" viewBox="0 0 16 16"><rect x="2.600" y="1.600" width="12.800" height="12" fill="#fff" stroke="#1a8fd6" stroke-width="1.200"/><rect x="2.600" y="1.600" width="12.800" height="2.600" fill="#1a8fd6"/><rect x="8.500" y="4.200" width="6.300" height="5" fill="#5ec1ea"/><path d="M8.500 4.200v9.400M8.500 9.200h6.900" stroke="#1a8fd6" stroke-width="1.100"/><circle cx="4.300" cy="12" r="3.400" fill="#1a8fd6" stroke="#e7e7e7" stroke-width="1"/><circle cx="4.300" cy="12" r="1.200" fill="#fff"/></svg>
<svg class="i" style="left:1895px;top:270px" width="16" height="15" viewBox="0 0 16 15"><circle cx="3.800" cy="3.800" r="2.900" fill="none" stroke="#1a8fd6" stroke-width="1.300"/><path d="M2.300 3.800h3" stroke="#1a8fd6" stroke-width="1.100"/><circle cx="11.800" cy="3.800" r="2.900" fill="none" stroke="#1a8fd6" stroke-width="1.300"/><path d="M10.300 3.800h3M11.800 2.300v3" stroke="#1a8fd6" stroke-width="1"/><circle cx="3.800" cy="11.300" r="2.900" fill="none" stroke="#1a8fd6" stroke-width="1.300"/><path d="M2.700 10.200l2.200 2.200M4.900 10.200l-2.200 2.200" stroke="#1a8fd6" stroke-width="1"/><circle cx="11.800" cy="11.300" r="2.900" fill="none" stroke="#f5871f" stroke-width="1.300"/><path d="M10.400 10.600h2.800M10.400 12h2.800" stroke="#f5871f" stroke-width="1"/></svg>
<svg class="i" style="left:1895px;top:292px" width="16" height="16" viewBox="0 0 16 16"><circle cx="8" cy="8" r="6.8" fill="none" stroke="#1a8fd6" stroke-width="1.3"/><circle cx="5.5" cy="6" r="1" fill="#1a8fd6"/><circle cx="10.5" cy="6" r="1" fill="#1a8fd6"/><circle cx="5.5" cy="10" r="1" fill="#1a8fd6"/><circle cx="10.5" cy="10" r="1" fill="#1a8fd6"/></svg>
<svg class="i" style="left:1895px;top:314px" width="16" height="15" viewBox="0 0 16 15"><rect x=".7" y=".7" width="14.6" height="13.6" fill="#fff" stroke="#1a8fd6" stroke-width="1.3"/><path d="M2 3h2v2h-2zM6 3h2v2h-2zM10 3h2v2h-2zM4 5h2v2h-2zM8 5h2v2h-2zM12 5h2v2h-2zM2 7h2v2h-2zM6 7h2v2h-2zM10 7h2v2h-2z" fill="#1a8fd6"/></svg>
<svg class="i" style="left:1895px;top:335px" width="16" height="17" viewBox="0 0 16 17"><rect x=".7" y="5" width="14.6" height="11" fill="#fff" stroke="#1a8fd6" stroke-width="1.3"/><rect x=".7" y="5" width="14.6" height="3" fill="#f5871f"/><path d="M.7 11.5h14.6M5.5 8v8M10.5 8v8" stroke="#1a8fd6" stroke-width="1.1"/><path d="M8 0v4M6 2.5l2 2l2-2" stroke="#f5871f" stroke-width="1.1" fill="none"/></svg>
<svg class="i" style="left:1895px;top:357px" width="17" height="16" viewBox="0 0 17 16"><rect x=".7" y=".7" width="11" height="14" fill="#fff" stroke="#1a8fd6" stroke-width="1.3"/><rect x=".7" y=".7" width="11" height="6" fill="#1a8fd6"/><rect x="9" y="5" width="7" height="6" fill="#fff" stroke="#1a8fd6" stroke-width="1.1"/><path d="M10.5 13h5" stroke="#1a8fd6" stroke-width="1.3"/></svg>
<div style="left:473px;top:967px;width:1445px;height:27px;background:#e4e4e4"></div>
<svg class="i" style="left:479px;top:972px" width="16" height="16" viewBox="0 0 16 16"><circle cx="8" cy="8" r="7" fill="none" stroke="#a8a8a8" stroke-width="1.2"/><path d="M4.5 8l2.6 2.8l4.6-5.2" fill="none" stroke="#a8a8a8" stroke-width="1.3"/></svg>
<span class="t gr" style="left:499px;top:970px;"><span style="letter-spacing:-1.17px">Sa</span><span style="letter-spacing:-0.42px">ve</span></span>
<svg class="i" style="left:542px;top:973px" width="14" height="14" viewBox="0 0 14 14"><rect x=".7" y=".7" width="12.6" height="12.6" fill="none" stroke="#a8a8a8" stroke-width="1.2"/><path d="M4 4l6 6M10 4l-6 6" stroke="#a8a8a8" stroke-width="1.2"/></svg>
<span class="t gr" style="left:561px;top:970px;"><span style="letter-spacing:-0.84px">Can</span><span style="letter-spacing:-0.06px">cel</span></span>
<svg class="i" style="left:616px;top:972px" width="16" height="16" viewBox="0 0 16 16"><path d="M3.5 1.5h10v10.5c0 1.5-1 2.5-2.5 2.5h-9.5c1.2-.3 2-1 2-2.500z" fill="#a8a8a8"/><circle cx="8.5" cy="8" r="2.6" fill="none" stroke="#e4e4e4" stroke-width="1.1"/><path d="M10.5 10l2 2" stroke="#e4e4e4" stroke-width="1.2"/></svg>
<span class="t gr" style="left:636px;top:970px;"><span style="letter-spacing:-1.25px">Sc</span><span style="letter-spacing:0.54px">ript</span></span>
<div class="vs" style="left:684px;top:969px;height:22px;background:#8c8c8c"></div>
<svg class="i" style="left:694px;top:973px" width="17" height="14" viewBox="0 0 17 14"><path d="M1 2.500h13M1 7h8M1 11.500h6" stroke="#9c9c9c" stroke-width="2"/><path d="M9 12.500l5.500-5.500" stroke="#9c9c9c" stroke-width="2"/></svg>
<svg class="i" style="left:718px;top:973px" width="17" height="14" viewBox="0 0 17 14"><path d="M1 2.500h13M1 7h8M1 11.500h6" stroke="#9c9c9c" stroke-width="2"/><path d="M12 5.500v8M8 9.500h8" stroke="#a2a2a2" stroke-width="1.700"/></svg>
<svg class="i" style="left:742px;top:973px" width="17" height="14" viewBox="0 0 17 14"><path d="M1 2.500h13M1 7h4M1 11.500h4" stroke="#9c9c9c" stroke-width="2"/><circle cx="11.500" cy="9.500" r="3.500" fill="#e4e4e4" stroke="#a2a2a2" stroke-width="1.200"/><path d="M11.500 7.800v3.400M9.800 9.500h3.400" stroke="#a2a2a2" stroke-width="1"/></svg>
<svg class="i" style="left:766px;top:973px" width="17" height="14" viewBox="0 0 17 14"><path d="M1 2.500h13M1 7h8M1 11.500h6" stroke="#9c9c9c" stroke-width="2"/><path d="M9.500 9.500h6" stroke="#9c9c9c" stroke-width="2"/></svg>
<div class="hd" style="left:790px;top:973px;height:15px;background:repeating-linear-gradient(#b3a899 0 2px,transparent 2px 4px);width:2px"></div>
<svg class="i" style="left:798px;top:973px" width="14" height="14" viewBox="0 0 14 14"><path d="M2 1v12M12 1l-6.500 6l6.500 6" fill="none" stroke="#8e8e8e" stroke-width="2.200"/></svg>
<svg class="i" style="left:822px;top:973px" width="14" height="14" viewBox="0 0 14 14"><path d="M9 1l-6.500 6l6.500 6" fill="none" stroke="#8e8e8e" stroke-width="2.200"/></svg>
<svg class="i" style="left:846px;top:973px" width="14" height="14" viewBox="0 0 14 14"><path d="M4 1l6.500 6l-6.500 6" fill="none" stroke="#8e8e8e" stroke-width="2.200"/></svg>
<svg class="i" style="left:867px;top:973px" width="14" height="14" viewBox="0 0 14 14"><path d="M11.500 1v12M1.500 1l6.500 6l-6.500 6" fill="none" stroke="#8e8e8e" stroke-width="2.200"/></svg>
<div class="vs" style="left:888px;top:969px;height:22px;background:#8c8c8c"></div>
<svg class="i" style="left:896px;top:973px" width="16" height="14" viewBox="0 0 16 14"><path d="M2 4v6h6M5.500 7.500l2.500 2.500l-2.500 2.500" fill="none" stroke="#aaa" stroke-width="1.200"/><path d="M9.500 .8h3l1.700 1.700v4.300h-4.700z" fill="#f4f4f4" stroke="#aaa" stroke-width="1.100"/></svg>
<svg class="i" style="left:920px;top:973px" width="15" height="14" viewBox="0 0 15 14"><path d="M1 4v-3h3M14 4v-3h-3M1 10v3h3M14 10v3h-3" fill="none" stroke="#aaa" stroke-width="1.400"/><path d="M5 3.800h3.200l1.800 1.800v4.600h-5z" fill="#f4f4f4" stroke="#aaa" stroke-width="1.100"/></svg>
<div class="hd" style="left:944px;top:973px;height:15px;background:repeating-linear-gradient(#b3a899 0 2px,transparent 2px 4px);width:2px"></div>
<svg class="i" style="left:954px;top:972px" width="15" height="16" viewBox="0 0 15 16"><path d="M1.500 9.500v5h12v-5" fill="none" stroke="#1a8fd6" stroke-width="1.500"/><path d="M7.500 12v-8" fill="none" stroke="#1a8fd6" stroke-width="1.900"/><path d="M3.500 5.500l4-4.800l4 4.800z" fill="#1a8fd6"/></svg>
<div class="hd" style="left:978px;top:973px;height:15px;background:repeating-linear-gradient(#b3a899 0 2px,transparent 2px 4px);width:2px"></div>
<svg class="i" style="left:986px;top:973px" width="14.4" height="14.4" viewBox="0 0 16 16"><path d="M5.600 3.200l.700-2.700h3.400l.700 2.700z" fill="#1a8fd6" transform="rotate(0 8 8)"/><path d="M5.600 3.200l.700-2.700h3.400l.700 2.700z" fill="#1a8fd6" transform="rotate(60 8 8)"/><path d="M5.600 3.200l.700-2.700h3.400l.700 2.700z" fill="#1a8fd6" transform="rotate(120 8 8)"/><path d="M5.600 3.200l.700-2.700h3.400l.700 2.700z" fill="#1a8fd6" transform="rotate(180 8 8)"/><path d="M5.600 3.200l.700-2.700h3.400l.700 2.700z" fill="#1a8fd6" transform="rotate(240 8 8)"/><path d="M5.600 3.200l.700-2.700h3.400l.700 2.700z" fill="#1a8fd6" transform="rotate(300 8 8)"/><circle cx="8" cy="8" r="5.500" fill="#1a8fd6"/><path d="M8 4.700l3.300 3.300l-3.300 3.300l-3.300-3.300z" fill="#6fcdf3"/></svg>
<div style="left:1009px;top:968px;width:57px;height:25px;background:#fff;border-bottom:1px solid #bdbdbd"></div>
<span class="t " style="left:1015px;top:971px;"><span style="letter-spacing:-0.34px">200</span></span>
<svg class="i" style="left:1073px;top:972px" width="17" height="15" viewBox="0 0 17 15"><path d="M1.800 7.500c0-2.800 1.500-4.300 4.200-4.300h6.500" fill="none" stroke="#1e9e3a" stroke-width="2"/><path d="M11.300 0l4.300 3.200l-4.300 3.200z" fill="#1e9e3a"/><path d="M15.200 7.500c0 2.800-1.500 4.300-4.200 4.300h-6.500" fill="none" stroke="#1e9e3a" stroke-width="2"/><path d="M5.700 8.600l-4.300 3.200l4.300 3.200z" fill="#1e9e3a"/></svg>
<span class="t " style="left:1098px;top:971px;"><span style="letter-spacing:-0.34px">200</span><span style="letter-spacing:1.24px">+</span></span>
<div class="hd" style="left:1140px;top:973px;height:15px;background:repeating-linear-gradient(#b3a899 0 2px,transparent 2px 4px);width:2px"></div>
<span class="t " style="left:1151px;top:971px;"><span style="letter-spacing:-1.83px">R</span><span style="letter-spacing:0.41px">ow</span><span style="letter-spacing:-0.95px">s: </span><span style="letter-spacing:-0.34px">1</span></span>
<svg class="i" style="left:1627px;top:971px" width="16" height="16" viewBox="0 0 16 16"><rect x="4.500" y="4" width="10" height="8.500" fill="#5ec1ea" stroke="#1a8fd6" stroke-width="1.200"/><path d="M1.500 2.500v11M1.500 2.500h1.500M1.500 13.500h1.500M6.500 .5v15M5 .5h3M5 15.500h3" stroke="#1a8fd6" stroke-width="1.100" fill="none"/></svg>
<span class="t " style="left:1649px;top:969px;"><span style="letter-spacing:-0.11px">200 row(s) fetche</span><span style="letter-spacing:0.20px">d - 3</span><span style="letter-spacing:-0.55px">.192s (</span><span style="letter-spacing:0.26px">+14m</span><span style="letter-spacing:-0.75px">s)</span></span>
<svg class="i" style="left:1896px;top:976px" width="16" height="16" viewBox="0 0 16 16"><rect x="1" y="2.500" width="4.500" height="12.500" rx="1" fill="#1a8fd6"/><path d="M7.500 14h7" stroke="#1a8fd6" stroke-width="2.200" stroke-linecap="round"/><path d="M10 5.500c2.500 0 4 1.500 4 4.500" stroke="#1a8fd6" stroke-width="1.600" fill="none"/><path d="M11 2.500l-3 3l3 3z" fill="#1a8fd6"/></svg>
</div>
<div class="abs">
<div style="left:0;top:994px;width:1918px;height:26px;background:#f0f0f0"></div>
<span class="t " style="left:4px;top:996px;"><span style="letter-spacing:-1.09px">Re</span><span style="letter-spacing:0.29px">trie</span><span style="letter-spacing:-0.50px">ves a </span><span style="letter-spacing:0.20px">paginated list of me</span><span style="letter-spacing:-0.12px">rchant</span><span style="letter-spacing:0.39px">-ma</span><span style="letter-spacing:0.03px">naged and th</span><span style="letter-spacing:0.44px">ird-part</span><span style="letter-spacing:0.10px">y ful</span><span style="letter-spacing:0.50px">fillme</span><span style="letter-spacing:0.16px">nt order</span><span style="letter-spacing:-1.33px">s.</span></span>
<div style="left:1501px;top:994px;width:1px;height:22px;background:#a0a0a0"></div>
<span class="t " style="left:1509px;top:996px;"><span style="letter-spacing:-1.11px">IST</span></span>
<div style="left:1535px;top:994px;width:1px;height:22px;background:#a0a0a0"></div>
<span class="t " style="left:1543px;top:996px;"><span style="letter-spacing:-0.34px">en</span></span>
<div class="hd s" style="left:1563px;top:999px;height:16px"></div>
</div>
</body></html>
